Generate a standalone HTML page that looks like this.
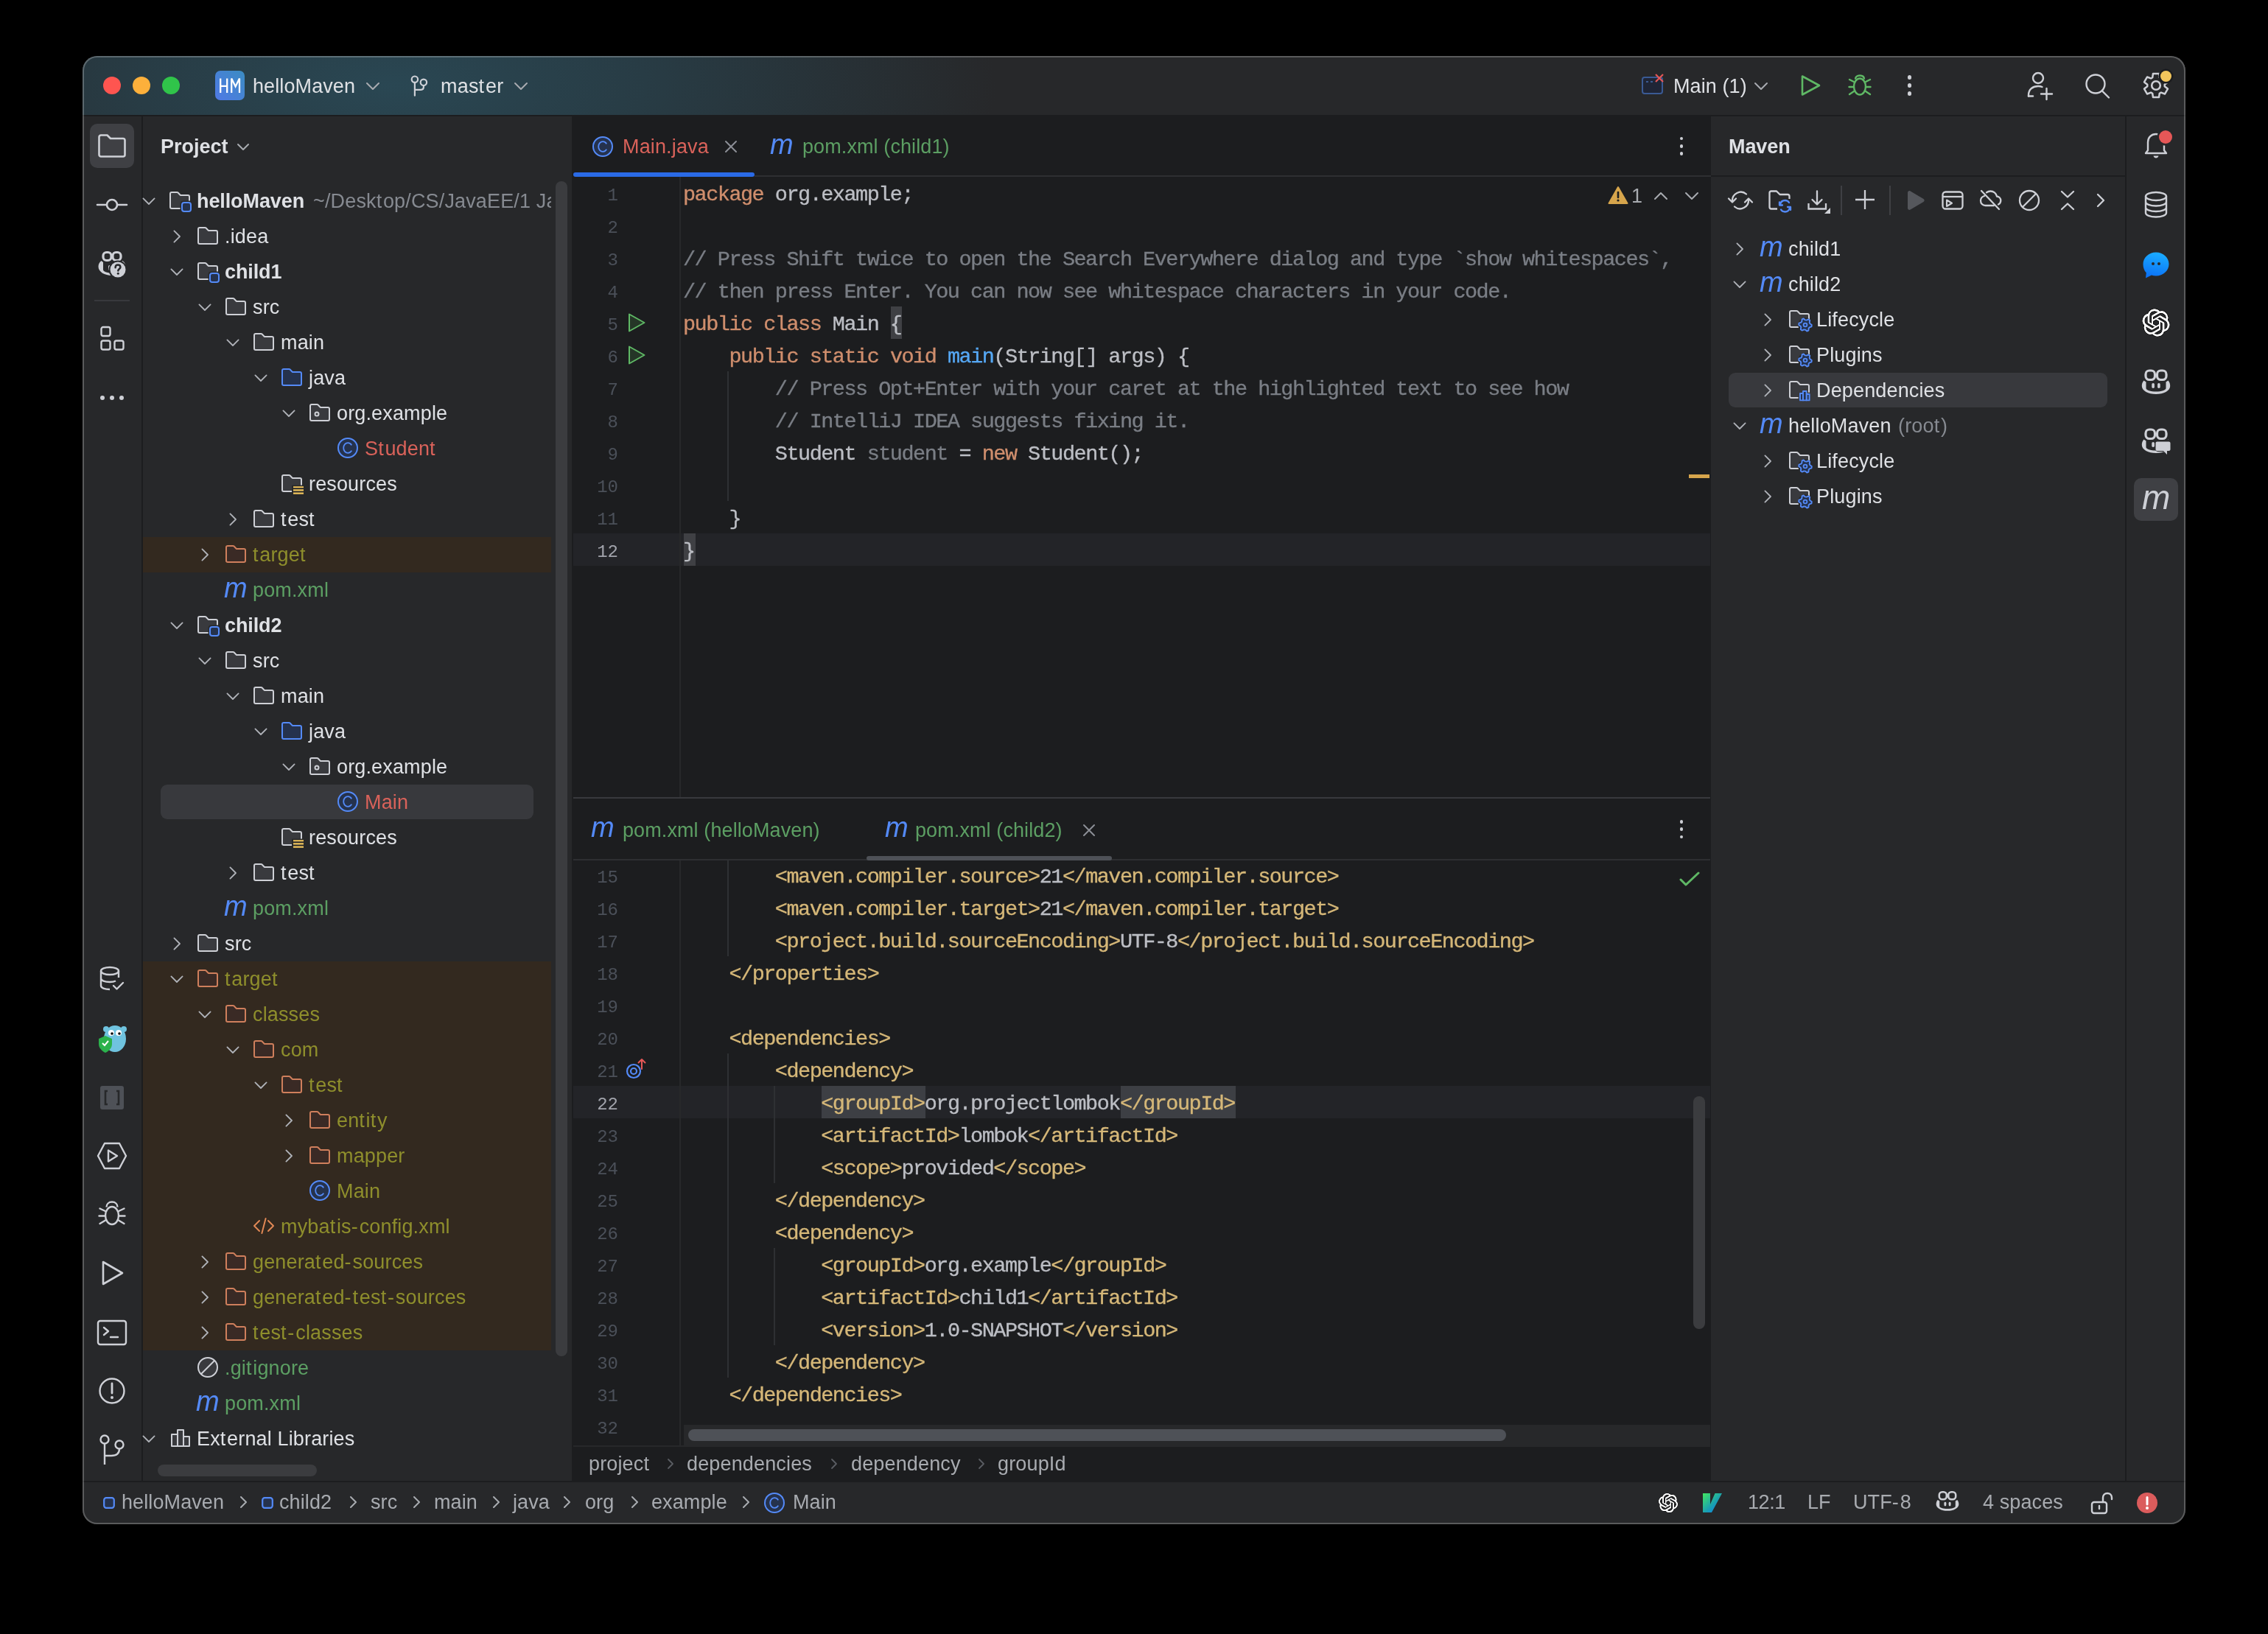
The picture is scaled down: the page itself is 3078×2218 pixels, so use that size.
<!DOCTYPE html><html><head><meta charset="utf-8"><style>
*{margin:0;padding:0;box-sizing:border-box}
html,body{width:3078px;height:2218px;background:#000;overflow:hidden}
.t{position:absolute;white-space:pre;will-change:transform}
.r{position:absolute}
.s{position:absolute;overflow:visible}
#win{position:absolute;left:112px;top:76px;width:2854px;height:1993px;border-radius:20px;overflow:hidden;background:#27282a}
</style></head><body><div id="win"><div style="position:absolute;left:-112px;top:-76px;width:3078px;height:2218px">
<div class="r" style="left:112px;top:76px;width:2854px;height:80px;background:radial-gradient(ellipse 820px 300px at 420px 40px, #2a4753 0%, #283c45 42%, #27282a 100%);"></div>
<div class="r" style="left:112px;top:156px;width:2854px;height:1855px;background:#27282a;"></div>
<div class="r" style="left:112px;top:156px;width:2854px;height:2px;background:#1c1d1f;"></div>
<div class="r" style="left:192px;top:156px;width:2px;height:1855px;background:#1c1d1f;"></div>
<div class="r" style="left:776px;top:156px;width:1546px;height:1855px;background:#1c1d1f;"></div>
<div class="r" style="left:2884px;top:156px;width:2px;height:1855px;background:#1c1d1f;"></div>
<div class="r" style="left:112px;top:2010px;width:2854px;height:2px;background:#1c1d1f;"></div>
<div class="r" style="left:112px;top:2012px;width:2854px;height:57px;background:#27282a;"></div>
<div class="r" style="left:140px;top:104px;width:24px;height:24px;border-radius:12px;background:#fe5550"></div>
<div class="r" style="left:180px;top:104px;width:24px;height:24px;border-radius:12px;background:#fdb03b"></div>
<div class="r" style="left:220px;top:104px;width:24px;height:24px;border-radius:12px;background:#30c44a"></div>
<div class="r" style="left:292px;top:96px;width:40px;height:40px;background:linear-gradient(45deg,#5079e6 0%,#3b8cc2 100%);border-radius:7px"></div>
<svg class="s" style="left:292px;top:96px;" width="40" height="40" viewBox="0 0 40 40" fill="none"><path d="M7.2 10.6V30M16.2 10.6V30M7.2 20.8H16.2M22.2 30V10.6L27.6 21.5L33 10.6V30" stroke="#fff" stroke-width="2.3" stroke-linejoin="miter"/></svg>
<div class="t" style="left:343px;top:100.64px;font-size:27px;line-height:32px;color:#dfe1e5;font-weight:400;letter-spacing:0.1px;font-family:'Liberation Sans', sans-serif;">helloMaven</div>
<svg class="s" style="left:497px;top:111.0px;" width="18" height="12.0" viewBox="0 0 18 12.0" fill="none"><path d="M1 2L9.0 10.0L17 2" stroke="#a8abb0" stroke-width="2" stroke-linecap="round" stroke-linejoin="round"/></svg>
<svg class="s" style="left:556px;top:100px;" width="28" height="34" viewBox="0 0 28 34" fill="none"><circle cx="6.9" cy="7.7" r="4.2" stroke="#ced0d6" stroke-width="2.2"/><circle cx="18.9" cy="11.8" r="4.2" stroke="#ced0d6" stroke-width="2.2"/><path d="M6.9 11.9V29.7M6.9 21.8H15.4C17.4 21.8 18.9 20.3 18.9 18.3V16" stroke="#ced0d6" stroke-width="2.2" stroke-linecap="round"/></svg>
<div class="t" style="left:598px;top:100.64px;font-size:27px;line-height:32px;color:#dfe1e5;font-weight:400;letter-spacing:0.2px;font-family:'Liberation Sans', sans-serif;">mas<span style="letter-spacing:1.80px">t</span>er</div>
<svg class="s" style="left:698px;top:111.0px;" width="18" height="12.0" viewBox="0 0 18 12.0" fill="none"><path d="M1 2L9.0 10.0L17 2" stroke="#a8abb0" stroke-width="2" stroke-linecap="round" stroke-linejoin="round"/></svg>
<svg class="s" style="left:2226px;top:98px;" width="36" height="34" viewBox="0 0 36 34" fill="none"><rect x="3" y="7" width="27" height="22" rx="3" fill="#1f2536" stroke="#3a5a94" stroke-width="2"/><path d="M8 13H11M14 13H17" stroke="#3a5a94" stroke-width="2"/><path d="M21 3L31 13M31 3L21 13" stroke="#e55757" stroke-width="2.2"/></svg>
<div class="t" style="left:2271px;top:100.64px;font-size:27px;line-height:32px;color:#dfe1e5;font-weight:400;letter-spacing:0.1px;font-family:'Liberation Sans', sans-serif;">Main (1)</div>
<svg class="s" style="left:2381px;top:111.0px;" width="18" height="12.0" viewBox="0 0 18 12.0" fill="none"><path d="M1 2L9.0 10.0L17 2" stroke="#a8abb0" stroke-width="2" stroke-linecap="round" stroke-linejoin="round"/></svg>
<svg class="s" style="left:2440px;top:98px;" width="34" height="36" viewBox="0 0 34 36" fill="none"><path d="M6 5.5V30.5L29 18Z" stroke="#5fb865" stroke-width="2.6" stroke-linejoin="round"/></svg>
<svg class="s" style="left:2506px;top:98px;" width="36" height="36" viewBox="0 0 36 36" fill="none"><path d="M12 9.5C12 6.5 14 4.5 18 4.5C22 4.5 24 6.5 24 9.5" stroke="#5fb865" stroke-width="2.4"/><ellipse cx="18" cy="19.5" rx="8" ry="11" stroke="#5fb865" stroke-width="2.4"/><path d="M10 13L4 10M26 13L32 10M10 20H3.5M26 20H32.5M10 26L4 30M26 26L32 30" stroke="#5fb865" stroke-width="2.4" stroke-linecap="round"/></svg>
<div class="r" style="left:2589px;top:102.3px;width:5.4px;height:5.4px;border-radius:3px;background:#ced0d6"></div>
<div class="r" style="left:2589px;top:113.3px;width:5.4px;height:5.4px;border-radius:3px;background:#ced0d6"></div>
<div class="r" style="left:2589px;top:124.3px;width:5.4px;height:5.4px;border-radius:3px;background:#ced0d6"></div>
<svg class="s" style="left:2746px;top:96px;" width="44" height="40" viewBox="0 0 44 40" fill="none"><circle cx="20" cy="10" r="7" stroke="#ced0d6" stroke-width="2.4"/><path d="M7 34.5V33C7 25 13 21 20 21C22 21 24 21.3 25.5 22" stroke="#ced0d6" stroke-width="2.4" stroke-linecap="round"/><path d="M7 34.5H13" stroke="#ced0d6" stroke-width="2.4" stroke-linecap="round"/><path d="M31.5 24V39M24 31.5H39" stroke="#ced0d6" stroke-width="2.4" stroke-linecap="round"/></svg>
<svg class="s" style="left:2826px;top:96px;" width="42" height="42" viewBox="0 0 42 42" fill="none"><circle cx="18" cy="18" r="12.5" stroke="#ced0d6" stroke-width="2.4"/><path d="M27.5 28L36 36.5" stroke="#ced0d6" stroke-width="2.4" stroke-linecap="round"/></svg>
<svg class="s" style="left:2906px;top:96px;" width="40" height="40" viewBox="0 0 40 40" fill="none"><path d="M15.20 9.22 L15.98 3.89 L24.02 3.89 L24.80 9.22 L26.94 10.45 L31.94 8.47 L35.96 15.42 L31.74 18.77 L31.74 21.23 L35.96 24.58 L31.94 31.53 L26.94 29.55 L24.80 30.78 L24.02 36.11 L15.98 36.11 L15.20 30.78 L13.06 29.55 L8.06 31.53 L4.04 24.58 L8.26 21.23 L8.26 18.77 L4.04 15.42 L8.06 8.47 L13.06 10.45Z" stroke="#ced0d6" stroke-width="2.5" stroke-linejoin="round"/><circle cx="20" cy="20" r="5.8" stroke="#ced0d6" stroke-width="2.6"/></svg>
<div class="r" style="left:2931.5px;top:95.5px;width:15px;height:15px;border-radius:8px;background:#f2c55c;box-shadow:0 0 0 2.5px #1c1d1f"></div>
<div class="r" style="left:122px;top:168px;width:60px;height:60px;background:#3f4044;border-radius:10px"></div>
<svg class="s" style="left:132px;top:181px;" width="40" height="34" viewBox="0 0 40 34" fill="none"><path d="M2.5 5C2.5 3.6 3.6 2.5 5 2.5H13.5L18 7H35C36.4 7 37.5 8.1 37.5 9.5V29C37.5 30.4 36.4 31.5 35 31.5H5C3.6 31.5 2.5 30.4 2.5 29Z" stroke="#ced0d6" stroke-width="2.6" stroke-linejoin="round"/></svg>
<svg class="s" style="left:130px;top:265px;" width="44" height="26" viewBox="0 0 44 26" fill="none"><path d="M2 13H14M30 13H42" stroke="#ced0d6" stroke-width="2.6" stroke-linecap="round"/><circle cx="22" cy="13" r="7" stroke="#ced0d6" stroke-width="2.6"/></svg>
<svg class="s" style="left:132px;top:340px;" width="40" height="38" viewBox="0 0 40 38" fill="none"><rect x="8" y="2.5" width="11" height="11" rx="4.5" stroke="#ced0d6" stroke-width="3.2"/><rect x="21" y="2.5" width="11" height="11" rx="4.5" stroke="#ced0d6" stroke-width="3.2"/><path d="M5.5 14C2.5 16 1.5 19 1.5 22C1.5 29 10 34 20 34C30 34 38.5 29 38.5 22C38.5 19 37.5 16 34.5 14L32 16V26C32 28.5 27 30.5 20 30.5C13 30.5 8 28.5 8 26V16Z" fill="#ced0d6"/><rect x="15" y="20" width="3.4" height="7" rx="1.7" fill="#ced0d6"/><circle cx="28" cy="26" r="12.5" fill="#27282a"/><circle cx="28" cy="26" r="10.5" fill="#ced0d6"/><path d="M24.6 23.2C24.6 20.9 26.1 19.6 28 19.6C30 19.6 31.4 20.8 31.4 22.7C31.4 24.9 28.3 25.2 28.3 27.6" stroke="#27282a" stroke-width="2.5" stroke-linecap="round"/><circle cx="28.3" cy="31.3" r="1.5" fill="#27282a"/></svg>
<div class="r" style="left:128px;top:407px;width:48px;height:2px;background:#38393d;"></div>
<svg class="s" style="left:135px;top:442px;" width="40" height="36" viewBox="0 0 40 36" fill="none"><rect x="2.5" y="2" width="12" height="12" rx="2.5" stroke="#ced0d6" stroke-width="2.4"/><rect x="2.5" y="20.5" width="12" height="12" rx="2.5" stroke="#ced0d6" stroke-width="2.4"/><rect x="20.5" y="20.5" width="12" height="12" rx="2.5" stroke="#ced0d6" stroke-width="2.4"/></svg>
<div class="r" style="left:136px;top:536.5px;width:6px;height:6px;border-radius:3px;background:#ced0d6"></div>
<div class="r" style="left:149px;top:536.5px;width:6px;height:6px;border-radius:3px;background:#ced0d6"></div>
<div class="r" style="left:162px;top:536.5px;width:6px;height:6px;border-radius:3px;background:#ced0d6"></div>
<svg class="s" style="left:132px;top:1310px;" width="40" height="40" viewBox="0 0 40 40" fill="none"><ellipse cx="17" cy="8" rx="12" ry="5" stroke="#ced0d6" stroke-width="2.4"/><path d="M5 8V28C5 31 10 33 17 33M29 8V17M5 18C5 21 10 23 17 23C20 23 23 22.5 25 21.5" stroke="#ced0d6" stroke-width="2.4"/><path d="M22 28L26.5 32.5L35 24" stroke="#ced0d6" stroke-width="2.4" stroke-linecap="round" stroke-linejoin="round"/></svg>
<svg class="s" style="left:130px;top:1388px;" width="46" height="44" viewBox="0 0 46 44" fill="none"><ellipse cx="26" cy="22" rx="15" ry="18" fill="#6fc3df"/><circle cx="14" cy="9" r="4" fill="#6fc3df"/><circle cx="38" cy="9" r="4" fill="#6fc3df"/><circle cx="21" cy="14" r="4" fill="#fff"/><circle cx="31" cy="14" r="4" fill="#fff"/><circle cx="22" cy="15" r="1.8" fill="#000"/><circle cx="32" cy="15" r="1.8" fill="#000"/><path d="M4 22L13 18L22 22V29C22 35 17 39 13 41C9 39 4 35 4 29Z" fill="#2bb24c"/><path d="M9 28L12 31L17 25" stroke="#fff" stroke-width="2" fill="none"/></svg>
<svg class="s" style="left:134px;top:1472px;" width="36" height="36" viewBox="0 0 36 36" fill="none"><rect x="2" y="2" width="32" height="32" rx="3" fill="#4e5157"/><path d="M12 9H9V27H12M24 9H27V27H24" stroke="#27282a" stroke-width="2.6"/></svg>
<svg class="s" style="left:130px;top:1549px;" width="44" height="40" viewBox="0 0 44 40" fill="none"><path d="M12 3H32L41 20L32 37H12L3 20Z" stroke="#ced0d6" stroke-width="2.4" stroke-linejoin="round"/><path d="M17 12.5V27.5L29 20Z" stroke="#ced0d6" stroke-width="2.4" stroke-linejoin="round"/></svg>
<svg class="s" style="left:131px;top:1628px;" width="42" height="42" viewBox="0 0 42 42" fill="none"><path d="M13.5 10.5C13.5 6.5 16.5 3.5 21 3.5C25.5 3.5 28.5 6.5 28.5 10.5" stroke="#ced0d6" stroke-width="2.4"/><ellipse cx="21" cy="22" rx="9" ry="12" stroke="#ced0d6" stroke-width="2.4"/><path d="M12 16L4.5 12.5M30 16L37.5 12.5M12 22.5H3.5M30 22.5H38.5M12 28.5L4.5 33M30 28.5L37.5 33" stroke="#ced0d6" stroke-width="2.4" stroke-linecap="round"/></svg>
<svg class="s" style="left:134px;top:1708px;" width="36" height="40" viewBox="0 0 36 40" fill="none"><path d="M6 5V35L32 20Z" stroke="#ced0d6" stroke-width="2.6" stroke-linejoin="round"/></svg>
<svg class="s" style="left:130px;top:1788px;" width="44" height="42" viewBox="0 0 44 42" fill="none"><rect x="3" y="5" width="38" height="32" rx="3" stroke="#ced0d6" stroke-width="2.4"/><path d="M11 14L17 19L11 24M20 27H30" stroke="#ced0d6" stroke-width="2.4" stroke-linecap="round" stroke-linejoin="round"/></svg>
<svg class="s" style="left:132px;top:1868px;" width="40" height="40" viewBox="0 0 40 40" fill="none"><circle cx="20" cy="20" r="16.5" stroke="#ced0d6" stroke-width="2.4"/><path d="M20 10V23" stroke="#ced0d6" stroke-width="2.8" stroke-linecap="round"/><circle cx="20" cy="29" r="2" fill="#ced0d6"/></svg>
<svg class="s" style="left:132px;top:1946px;" width="40" height="44" viewBox="0 0 40 44" fill="none"><circle cx="10" cy="8" r="5.5" stroke="#ced0d6" stroke-width="2.4"/><circle cx="30" cy="15" r="5.5" stroke="#ced0d6" stroke-width="2.4"/><path d="M10 13.5V42M30 20.5C30 27 26 30 19 30H10" stroke="#ced0d6" stroke-width="2.4"/></svg>
<div class="t" style="left:218px;top:182.64px;font-size:27px;line-height:32px;color:#dfe1e5;font-weight:700;letter-spacing:0.0px;font-family:'Liberation Sans', sans-serif;">Project</div>
<svg class="s" style="left:322px;top:193.5px;" width="16" height="11.0" viewBox="0 0 16 11.0" fill="none"><path d="M1 2L8.0 9.0L15 2" stroke="#a8abb0" stroke-width="2" stroke-linecap="round" stroke-linejoin="round"/></svg>
<div class="r" style="left:194px;top:729px;width:554px;height:48px;background:#33291f;"></div>
<div class="r" style="left:194px;top:1305px;width:554px;height:528px;background:#33291f;"></div>
<svg class="s" style="left:186px;top:257px;" width="32" height="32" viewBox="0 0 16 16" fill="none"><path d="M4.2 6.2L8 10L11.8 6.2" stroke="#b0b3b9" stroke-width="0.9" stroke-linecap="round" stroke-linejoin="round"/></svg>
<svg class="s" style="left:228px;top:256px;" width="32" height="32" viewBox="0 0 16 16" fill="none"><path d="M1.5 3.5C1.5 2.95 1.95 2.5 2.5 2.5H6.09C6.35 2.5 6.61 2.61 6.79 2.79L8.21 4.21C8.39 4.39 8.65 4.5 8.91 4.5H13.5C14.05 4.5 14.5 4.95 14.5 5.5V12.5C14.5 13.05 14.05 13.5 13.5 13.5H2.5C1.95 13.5 1.5 13.05 1.5 12.5V3.5Z" fill="#393a3e" stroke="#ced0d6"/><rect x="8.3" y="8.3" width="8.4" height="8.4" rx="2" fill="#27282a"/><rect x="9.5" y="9.5" width="6" height="6" rx="1.5" fill="#25324d" stroke="#548af7"/></svg>
<div class="t" style="left:267px;top:256.64px;font-size:27px;line-height:32px;color:#dfe1e5;font-weight:700;letter-spacing:-0.1px;font-family:'Liberation Sans', sans-serif;">helloMaven</div>
<svg class="s" style="left:224px;top:305px;" width="32" height="32" viewBox="0 0 16 16" fill="none"><path d="M6.2 4.2L10 8L6.2 11.8" stroke="#b0b3b9" stroke-width="0.9" stroke-linecap="round" stroke-linejoin="round"/></svg>
<svg class="s" style="left:266px;top:304px;" width="32" height="32" viewBox="0 0 16 16" fill="none"><path d="M1.5 3.5C1.5 2.95 1.95 2.5 2.5 2.5H6.09C6.35 2.5 6.61 2.61 6.79 2.79L8.21 4.21C8.39 4.39 8.65 4.5 8.91 4.5H13.5C14.05 4.5 14.5 4.95 14.5 5.5V12.5C14.5 13.05 14.05 13.5 13.5 13.5H2.5C1.95 13.5 1.5 13.05 1.5 12.5V3.5Z" fill="#393a3e" stroke="#ced0d6"/></svg>
<div class="t" style="left:305px;top:304.64px;font-size:27px;line-height:32px;color:#dfe1e5;font-weight:400;letter-spacing:0.15px;font-family:'Liberation Sans', sans-serif;">.idea</div>
<svg class="s" style="left:224px;top:353px;" width="32" height="32" viewBox="0 0 16 16" fill="none"><path d="M4.2 6.2L8 10L11.8 6.2" stroke="#b0b3b9" stroke-width="0.9" stroke-linecap="round" stroke-linejoin="round"/></svg>
<svg class="s" style="left:266px;top:352px;" width="32" height="32" viewBox="0 0 16 16" fill="none"><path d="M1.5 3.5C1.5 2.95 1.95 2.5 2.5 2.5H6.09C6.35 2.5 6.61 2.61 6.79 2.79L8.21 4.21C8.39 4.39 8.65 4.5 8.91 4.5H13.5C14.05 4.5 14.5 4.95 14.5 5.5V12.5C14.5 13.05 14.05 13.5 13.5 13.5H2.5C1.95 13.5 1.5 13.05 1.5 12.5V3.5Z" fill="#393a3e" stroke="#ced0d6"/><rect x="8.3" y="8.3" width="8.4" height="8.4" rx="2" fill="#27282a"/><rect x="9.5" y="9.5" width="6" height="6" rx="1.5" fill="#25324d" stroke="#548af7"/></svg>
<div class="t" style="left:305px;top:352.64px;font-size:27px;line-height:32px;color:#dfe1e5;font-weight:700;letter-spacing:-0.1px;font-family:'Liberation Sans', sans-serif;">child1</div>
<svg class="s" style="left:262px;top:401px;" width="32" height="32" viewBox="0 0 16 16" fill="none"><path d="M4.2 6.2L8 10L11.8 6.2" stroke="#b0b3b9" stroke-width="0.9" stroke-linecap="round" stroke-linejoin="round"/></svg>
<svg class="s" style="left:304px;top:400px;" width="32" height="32" viewBox="0 0 16 16" fill="none"><path d="M1.5 3.5C1.5 2.95 1.95 2.5 2.5 2.5H6.09C6.35 2.5 6.61 2.61 6.79 2.79L8.21 4.21C8.39 4.39 8.65 4.5 8.91 4.5H13.5C14.05 4.5 14.5 4.95 14.5 5.5V12.5C14.5 13.05 14.05 13.5 13.5 13.5H2.5C1.95 13.5 1.5 13.05 1.5 12.5V3.5Z" fill="#393a3e" stroke="#ced0d6"/></svg>
<div class="t" style="left:343px;top:400.64px;font-size:27px;line-height:32px;color:#dfe1e5;font-weight:400;letter-spacing:0.15px;font-family:'Liberation Sans', sans-serif;">src</div>
<svg class="s" style="left:300px;top:449px;" width="32" height="32" viewBox="0 0 16 16" fill="none"><path d="M4.2 6.2L8 10L11.8 6.2" stroke="#b0b3b9" stroke-width="0.9" stroke-linecap="round" stroke-linejoin="round"/></svg>
<svg class="s" style="left:342px;top:448px;" width="32" height="32" viewBox="0 0 16 16" fill="none"><path d="M1.5 3.5C1.5 2.95 1.95 2.5 2.5 2.5H6.09C6.35 2.5 6.61 2.61 6.79 2.79L8.21 4.21C8.39 4.39 8.65 4.5 8.91 4.5H13.5C14.05 4.5 14.5 4.95 14.5 5.5V12.5C14.5 13.05 14.05 13.5 13.5 13.5H2.5C1.95 13.5 1.5 13.05 1.5 12.5V3.5Z" fill="#393a3e" stroke="#ced0d6"/></svg>
<div class="t" style="left:381px;top:448.64px;font-size:27px;line-height:32px;color:#dfe1e5;font-weight:400;letter-spacing:0.15px;font-family:'Liberation Sans', sans-serif;">main</div>
<svg class="s" style="left:338px;top:497px;" width="32" height="32" viewBox="0 0 16 16" fill="none"><path d="M4.2 6.2L8 10L11.8 6.2" stroke="#b0b3b9" stroke-width="0.9" stroke-linecap="round" stroke-linejoin="round"/></svg>
<svg class="s" style="left:380px;top:496px;" width="32" height="32" viewBox="0 0 16 16" fill="none"><path d="M1.5 3.5C1.5 2.95 1.95 2.5 2.5 2.5H6.09C6.35 2.5 6.61 2.61 6.79 2.79L8.21 4.21C8.39 4.39 8.65 4.5 8.91 4.5H13.5C14.05 4.5 14.5 4.95 14.5 5.5V12.5C14.5 13.05 14.05 13.5 13.5 13.5H2.5C1.95 13.5 1.5 13.05 1.5 12.5V3.5Z" fill="#25324d" stroke="#548af7"/></svg>
<div class="t" style="left:419px;top:496.64px;font-size:27px;line-height:32px;color:#dfe1e5;font-weight:400;letter-spacing:0.15px;font-family:'Liberation Sans', sans-serif;">java</div>
<svg class="s" style="left:376px;top:545px;" width="32" height="32" viewBox="0 0 16 16" fill="none"><path d="M4.2 6.2L8 10L11.8 6.2" stroke="#b0b3b9" stroke-width="0.9" stroke-linecap="round" stroke-linejoin="round"/></svg>
<svg class="s" style="left:418px;top:544px;" width="32" height="32" viewBox="0 0 16 16" fill="none"><path d="M1.5 3.5C1.5 2.95 1.95 2.5 2.5 2.5H6.09C6.35 2.5 6.61 2.61 6.79 2.79L8.21 4.21C8.39 4.39 8.65 4.5 8.91 4.5H13.5C14.05 4.5 14.5 4.95 14.5 5.5V12.5C14.5 13.05 14.05 13.5 13.5 13.5H2.5C1.95 13.5 1.5 13.05 1.5 12.5V3.5Z" fill="#393a3e" stroke="#ced0d6"/><circle cx="6" cy="9" r="1.25" stroke="#ced0d6"/></svg>
<div class="t" style="left:457px;top:544.64px;font-size:27px;line-height:32px;color:#dfe1e5;font-weight:400;letter-spacing:0.15px;font-family:'Liberation Sans', sans-serif;">org.example</div>
<svg class="s" style="left:456px;top:592px;" width="32" height="32" viewBox="0 0 16 16" fill="none"><circle cx="8" cy="8" r="6.5" fill="#25324d" stroke="#548af7"/><path d="M10.6 6.2C10.1 5.2 9.2 4.6 8.1 4.6C6.4 4.6 5.1 6.1 5.1 8C5.1 9.9 6.4 11.4 8.1 11.4C9.2 11.4 10.1 10.8 10.6 9.8" stroke="#548af7" stroke-width="0.9"/></svg>
<div class="t" style="left:495px;top:592.64px;font-size:27px;line-height:32px;color:#d9625a;font-weight:400;letter-spacing:0.15px;font-family:'Liberation Sans', sans-serif;">S<span style="letter-spacing:1.75px">t</span>uden<span style="letter-spacing:1.75px">t</span></div>
<svg class="s" style="left:380px;top:640px;" width="32" height="32" viewBox="0 0 16 16" fill="none"><path d="M1.5 3.5C1.5 2.95 1.95 2.5 2.5 2.5H6.09C6.35 2.5 6.61 2.61 6.79 2.79L8.21 4.21C8.39 4.39 8.65 4.5 8.91 4.5H13.5C14.05 4.5 14.5 4.95 14.5 5.5V12.5C14.5 13.05 14.05 13.5 13.5 13.5H2.5C1.95 13.5 1.5 13.05 1.5 12.5V3.5Z" fill="#393a3e" stroke="#ced0d6"/><rect x="8" y="9.3" width="9" height="7" fill="#27282a"/><path d="M9 10.6H16M9 12.7H16M9 14.8H16" stroke="#f2c55c" stroke-width="1.05"/></svg>
<div class="t" style="left:419px;top:640.64px;font-size:27px;line-height:32px;color:#dfe1e5;font-weight:400;letter-spacing:0.15px;font-family:'Liberation Sans', sans-serif;">resources</div>
<svg class="s" style="left:300px;top:689px;" width="32" height="32" viewBox="0 0 16 16" fill="none"><path d="M6.2 4.2L10 8L6.2 11.8" stroke="#b0b3b9" stroke-width="0.9" stroke-linecap="round" stroke-linejoin="round"/></svg>
<svg class="s" style="left:342px;top:688px;" width="32" height="32" viewBox="0 0 16 16" fill="none"><path d="M1.5 3.5C1.5 2.95 1.95 2.5 2.5 2.5H6.09C6.35 2.5 6.61 2.61 6.79 2.79L8.21 4.21C8.39 4.39 8.65 4.5 8.91 4.5H13.5C14.05 4.5 14.5 4.95 14.5 5.5V12.5C14.5 13.05 14.05 13.5 13.5 13.5H2.5C1.95 13.5 1.5 13.05 1.5 12.5V3.5Z" fill="#393a3e" stroke="#ced0d6"/></svg>
<div class="t" style="left:381px;top:688.64px;font-size:27px;line-height:32px;color:#dfe1e5;font-weight:400;letter-spacing:0.15px;font-family:'Liberation Sans', sans-serif;"><span style="letter-spacing:1.75px">t</span>es<span style="letter-spacing:1.75px">t</span></div>
<svg class="s" style="left:262px;top:737px;" width="32" height="32" viewBox="0 0 16 16" fill="none"><path d="M6.2 4.2L10 8L6.2 11.8" stroke="#b0b3b9" stroke-width="0.9" stroke-linecap="round" stroke-linejoin="round"/></svg>
<svg class="s" style="left:304px;top:736px;" width="32" height="32" viewBox="0 0 16 16" fill="none"><path d="M1.5 3.5C1.5 2.95 1.95 2.5 2.5 2.5H6.09C6.35 2.5 6.61 2.61 6.79 2.79L8.21 4.21C8.39 4.39 8.65 4.5 8.91 4.5H13.5C14.05 4.5 14.5 4.95 14.5 5.5V12.5C14.5 13.05 14.05 13.5 13.5 13.5H2.5C1.95 13.5 1.5 13.05 1.5 12.5V3.5Z" fill="#3a2a25" stroke="#cf7f5c"/></svg>
<div class="t" style="left:343px;top:736.64px;font-size:27px;line-height:32px;color:#8e8e2c;font-weight:400;letter-spacing:0.15px;font-family:'Liberation Sans', sans-serif;"><span style="letter-spacing:1.75px">t</span>arge<span style="letter-spacing:1.75px">t</span></div>
<div class="t" style="left:304px;top:775.33px;font-size:38px;line-height:46px;color:#548af7;font-weight:400;letter-spacing:0.0px;font-family:'Liberation Sans', sans-serif;font-style:italic">m</div>
<div class="t" style="left:343px;top:784.64px;font-size:27px;line-height:32px;color:#5c9f63;font-weight:400;letter-spacing:0.15px;font-family:'Liberation Sans', sans-serif;">pom.xml</div>
<svg class="s" style="left:224px;top:833px;" width="32" height="32" viewBox="0 0 16 16" fill="none"><path d="M4.2 6.2L8 10L11.8 6.2" stroke="#b0b3b9" stroke-width="0.9" stroke-linecap="round" stroke-linejoin="round"/></svg>
<svg class="s" style="left:266px;top:832px;" width="32" height="32" viewBox="0 0 16 16" fill="none"><path d="M1.5 3.5C1.5 2.95 1.95 2.5 2.5 2.5H6.09C6.35 2.5 6.61 2.61 6.79 2.79L8.21 4.21C8.39 4.39 8.65 4.5 8.91 4.5H13.5C14.05 4.5 14.5 4.95 14.5 5.5V12.5C14.5 13.05 14.05 13.5 13.5 13.5H2.5C1.95 13.5 1.5 13.05 1.5 12.5V3.5Z" fill="#393a3e" stroke="#ced0d6"/><rect x="8.3" y="8.3" width="8.4" height="8.4" rx="2" fill="#27282a"/><rect x="9.5" y="9.5" width="6" height="6" rx="1.5" fill="#25324d" stroke="#548af7"/></svg>
<div class="t" style="left:305px;top:832.64px;font-size:27px;line-height:32px;color:#dfe1e5;font-weight:700;letter-spacing:-0.1px;font-family:'Liberation Sans', sans-serif;">child2</div>
<svg class="s" style="left:262px;top:881px;" width="32" height="32" viewBox="0 0 16 16" fill="none"><path d="M4.2 6.2L8 10L11.8 6.2" stroke="#b0b3b9" stroke-width="0.9" stroke-linecap="round" stroke-linejoin="round"/></svg>
<svg class="s" style="left:304px;top:880px;" width="32" height="32" viewBox="0 0 16 16" fill="none"><path d="M1.5 3.5C1.5 2.95 1.95 2.5 2.5 2.5H6.09C6.35 2.5 6.61 2.61 6.79 2.79L8.21 4.21C8.39 4.39 8.65 4.5 8.91 4.5H13.5C14.05 4.5 14.5 4.95 14.5 5.5V12.5C14.5 13.05 14.05 13.5 13.5 13.5H2.5C1.95 13.5 1.5 13.05 1.5 12.5V3.5Z" fill="#393a3e" stroke="#ced0d6"/></svg>
<div class="t" style="left:343px;top:880.64px;font-size:27px;line-height:32px;color:#dfe1e5;font-weight:400;letter-spacing:0.15px;font-family:'Liberation Sans', sans-serif;">src</div>
<svg class="s" style="left:300px;top:929px;" width="32" height="32" viewBox="0 0 16 16" fill="none"><path d="M4.2 6.2L8 10L11.8 6.2" stroke="#b0b3b9" stroke-width="0.9" stroke-linecap="round" stroke-linejoin="round"/></svg>
<svg class="s" style="left:342px;top:928px;" width="32" height="32" viewBox="0 0 16 16" fill="none"><path d="M1.5 3.5C1.5 2.95 1.95 2.5 2.5 2.5H6.09C6.35 2.5 6.61 2.61 6.79 2.79L8.21 4.21C8.39 4.39 8.65 4.5 8.91 4.5H13.5C14.05 4.5 14.5 4.95 14.5 5.5V12.5C14.5 13.05 14.05 13.5 13.5 13.5H2.5C1.95 13.5 1.5 13.05 1.5 12.5V3.5Z" fill="#393a3e" stroke="#ced0d6"/></svg>
<div class="t" style="left:381px;top:928.64px;font-size:27px;line-height:32px;color:#dfe1e5;font-weight:400;letter-spacing:0.15px;font-family:'Liberation Sans', sans-serif;">main</div>
<svg class="s" style="left:338px;top:977px;" width="32" height="32" viewBox="0 0 16 16" fill="none"><path d="M4.2 6.2L8 10L11.8 6.2" stroke="#b0b3b9" stroke-width="0.9" stroke-linecap="round" stroke-linejoin="round"/></svg>
<svg class="s" style="left:380px;top:976px;" width="32" height="32" viewBox="0 0 16 16" fill="none"><path d="M1.5 3.5C1.5 2.95 1.95 2.5 2.5 2.5H6.09C6.35 2.5 6.61 2.61 6.79 2.79L8.21 4.21C8.39 4.39 8.65 4.5 8.91 4.5H13.5C14.05 4.5 14.5 4.95 14.5 5.5V12.5C14.5 13.05 14.05 13.5 13.5 13.5H2.5C1.95 13.5 1.5 13.05 1.5 12.5V3.5Z" fill="#25324d" stroke="#548af7"/></svg>
<div class="t" style="left:419px;top:976.64px;font-size:27px;line-height:32px;color:#dfe1e5;font-weight:400;letter-spacing:0.15px;font-family:'Liberation Sans', sans-serif;">java</div>
<svg class="s" style="left:376px;top:1025px;" width="32" height="32" viewBox="0 0 16 16" fill="none"><path d="M4.2 6.2L8 10L11.8 6.2" stroke="#b0b3b9" stroke-width="0.9" stroke-linecap="round" stroke-linejoin="round"/></svg>
<svg class="s" style="left:418px;top:1024px;" width="32" height="32" viewBox="0 0 16 16" fill="none"><path d="M1.5 3.5C1.5 2.95 1.95 2.5 2.5 2.5H6.09C6.35 2.5 6.61 2.61 6.79 2.79L8.21 4.21C8.39 4.39 8.65 4.5 8.91 4.5H13.5C14.05 4.5 14.5 4.95 14.5 5.5V12.5C14.5 13.05 14.05 13.5 13.5 13.5H2.5C1.95 13.5 1.5 13.05 1.5 12.5V3.5Z" fill="#393a3e" stroke="#ced0d6"/><circle cx="6" cy="9" r="1.25" stroke="#ced0d6"/></svg>
<div class="t" style="left:457px;top:1024.64px;font-size:27px;line-height:32px;color:#dfe1e5;font-weight:400;letter-spacing:0.15px;font-family:'Liberation Sans', sans-serif;">org.example</div>
<div class="r" style="left:218px;top:1065px;width:506px;height:47px;background:#38393d;border-radius:9px"></div>
<svg class="s" style="left:456px;top:1072px;" width="32" height="32" viewBox="0 0 16 16" fill="none"><circle cx="8" cy="8" r="6.5" fill="#25324d" stroke="#548af7"/><path d="M10.6 6.2C10.1 5.2 9.2 4.6 8.1 4.6C6.4 4.6 5.1 6.1 5.1 8C5.1 9.9 6.4 11.4 8.1 11.4C9.2 11.4 10.1 10.8 10.6 9.8" stroke="#548af7" stroke-width="0.9"/></svg>
<div class="t" style="left:495px;top:1072.64px;font-size:27px;line-height:32px;color:#d9625a;font-weight:400;letter-spacing:0.15px;font-family:'Liberation Sans', sans-serif;">Main</div>
<svg class="s" style="left:380px;top:1120px;" width="32" height="32" viewBox="0 0 16 16" fill="none"><path d="M1.5 3.5C1.5 2.95 1.95 2.5 2.5 2.5H6.09C6.35 2.5 6.61 2.61 6.79 2.79L8.21 4.21C8.39 4.39 8.65 4.5 8.91 4.5H13.5C14.05 4.5 14.5 4.95 14.5 5.5V12.5C14.5 13.05 14.05 13.5 13.5 13.5H2.5C1.95 13.5 1.5 13.05 1.5 12.5V3.5Z" fill="#393a3e" stroke="#ced0d6"/><rect x="8" y="9.3" width="9" height="7" fill="#27282a"/><path d="M9 10.6H16M9 12.7H16M9 14.8H16" stroke="#f2c55c" stroke-width="1.05"/></svg>
<div class="t" style="left:419px;top:1120.64px;font-size:27px;line-height:32px;color:#dfe1e5;font-weight:400;letter-spacing:0.15px;font-family:'Liberation Sans', sans-serif;">resources</div>
<svg class="s" style="left:300px;top:1169px;" width="32" height="32" viewBox="0 0 16 16" fill="none"><path d="M6.2 4.2L10 8L6.2 11.8" stroke="#b0b3b9" stroke-width="0.9" stroke-linecap="round" stroke-linejoin="round"/></svg>
<svg class="s" style="left:342px;top:1168px;" width="32" height="32" viewBox="0 0 16 16" fill="none"><path d="M1.5 3.5C1.5 2.95 1.95 2.5 2.5 2.5H6.09C6.35 2.5 6.61 2.61 6.79 2.79L8.21 4.21C8.39 4.39 8.65 4.5 8.91 4.5H13.5C14.05 4.5 14.5 4.95 14.5 5.5V12.5C14.5 13.05 14.05 13.5 13.5 13.5H2.5C1.95 13.5 1.5 13.05 1.5 12.5V3.5Z" fill="#393a3e" stroke="#ced0d6"/></svg>
<div class="t" style="left:381px;top:1168.64px;font-size:27px;line-height:32px;color:#dfe1e5;font-weight:400;letter-spacing:0.15px;font-family:'Liberation Sans', sans-serif;"><span style="letter-spacing:1.75px">t</span>es<span style="letter-spacing:1.75px">t</span></div>
<div class="t" style="left:304px;top:1207.33px;font-size:38px;line-height:46px;color:#548af7;font-weight:400;letter-spacing:0.0px;font-family:'Liberation Sans', sans-serif;font-style:italic">m</div>
<div class="t" style="left:343px;top:1216.64px;font-size:27px;line-height:32px;color:#5c9f63;font-weight:400;letter-spacing:0.15px;font-family:'Liberation Sans', sans-serif;">pom.xml</div>
<svg class="s" style="left:224px;top:1265px;" width="32" height="32" viewBox="0 0 16 16" fill="none"><path d="M6.2 4.2L10 8L6.2 11.8" stroke="#b0b3b9" stroke-width="0.9" stroke-linecap="round" stroke-linejoin="round"/></svg>
<svg class="s" style="left:266px;top:1264px;" width="32" height="32" viewBox="0 0 16 16" fill="none"><path d="M1.5 3.5C1.5 2.95 1.95 2.5 2.5 2.5H6.09C6.35 2.5 6.61 2.61 6.79 2.79L8.21 4.21C8.39 4.39 8.65 4.5 8.91 4.5H13.5C14.05 4.5 14.5 4.95 14.5 5.5V12.5C14.5 13.05 14.05 13.5 13.5 13.5H2.5C1.95 13.5 1.5 13.05 1.5 12.5V3.5Z" fill="#393a3e" stroke="#ced0d6"/></svg>
<div class="t" style="left:305px;top:1264.64px;font-size:27px;line-height:32px;color:#dfe1e5;font-weight:400;letter-spacing:0.15px;font-family:'Liberation Sans', sans-serif;">src</div>
<svg class="s" style="left:224px;top:1313px;" width="32" height="32" viewBox="0 0 16 16" fill="none"><path d="M4.2 6.2L8 10L11.8 6.2" stroke="#b0b3b9" stroke-width="0.9" stroke-linecap="round" stroke-linejoin="round"/></svg>
<svg class="s" style="left:266px;top:1312px;" width="32" height="32" viewBox="0 0 16 16" fill="none"><path d="M1.5 3.5C1.5 2.95 1.95 2.5 2.5 2.5H6.09C6.35 2.5 6.61 2.61 6.79 2.79L8.21 4.21C8.39 4.39 8.65 4.5 8.91 4.5H13.5C14.05 4.5 14.5 4.95 14.5 5.5V12.5C14.5 13.05 14.05 13.5 13.5 13.5H2.5C1.95 13.5 1.5 13.05 1.5 12.5V3.5Z" fill="#3a2a25" stroke="#cf7f5c"/></svg>
<div class="t" style="left:305px;top:1312.64px;font-size:27px;line-height:32px;color:#8e8e2c;font-weight:400;letter-spacing:0.15px;font-family:'Liberation Sans', sans-serif;"><span style="letter-spacing:1.75px">t</span>arge<span style="letter-spacing:1.75px">t</span></div>
<svg class="s" style="left:262px;top:1361px;" width="32" height="32" viewBox="0 0 16 16" fill="none"><path d="M4.2 6.2L8 10L11.8 6.2" stroke="#b0b3b9" stroke-width="0.9" stroke-linecap="round" stroke-linejoin="round"/></svg>
<svg class="s" style="left:304px;top:1360px;" width="32" height="32" viewBox="0 0 16 16" fill="none"><path d="M1.5 3.5C1.5 2.95 1.95 2.5 2.5 2.5H6.09C6.35 2.5 6.61 2.61 6.79 2.79L8.21 4.21C8.39 4.39 8.65 4.5 8.91 4.5H13.5C14.05 4.5 14.5 4.95 14.5 5.5V12.5C14.5 13.05 14.05 13.5 13.5 13.5H2.5C1.95 13.5 1.5 13.05 1.5 12.5V3.5Z" fill="#3a2a25" stroke="#cf7f5c"/></svg>
<div class="t" style="left:343px;top:1360.64px;font-size:27px;line-height:32px;color:#8e8e2c;font-weight:400;letter-spacing:0.15px;font-family:'Liberation Sans', sans-serif;">classes</div>
<svg class="s" style="left:300px;top:1409px;" width="32" height="32" viewBox="0 0 16 16" fill="none"><path d="M4.2 6.2L8 10L11.8 6.2" stroke="#b0b3b9" stroke-width="0.9" stroke-linecap="round" stroke-linejoin="round"/></svg>
<svg class="s" style="left:342px;top:1408px;" width="32" height="32" viewBox="0 0 16 16" fill="none"><path d="M1.5 3.5C1.5 2.95 1.95 2.5 2.5 2.5H6.09C6.35 2.5 6.61 2.61 6.79 2.79L8.21 4.21C8.39 4.39 8.65 4.5 8.91 4.5H13.5C14.05 4.5 14.5 4.95 14.5 5.5V12.5C14.5 13.05 14.05 13.5 13.5 13.5H2.5C1.95 13.5 1.5 13.05 1.5 12.5V3.5Z" fill="#3a2a25" stroke="#cf7f5c"/></svg>
<div class="t" style="left:381px;top:1408.64px;font-size:27px;line-height:32px;color:#8e8e2c;font-weight:400;letter-spacing:0.15px;font-family:'Liberation Sans', sans-serif;">com</div>
<svg class="s" style="left:338px;top:1457px;" width="32" height="32" viewBox="0 0 16 16" fill="none"><path d="M4.2 6.2L8 10L11.8 6.2" stroke="#b0b3b9" stroke-width="0.9" stroke-linecap="round" stroke-linejoin="round"/></svg>
<svg class="s" style="left:380px;top:1456px;" width="32" height="32" viewBox="0 0 16 16" fill="none"><path d="M1.5 3.5C1.5 2.95 1.95 2.5 2.5 2.5H6.09C6.35 2.5 6.61 2.61 6.79 2.79L8.21 4.21C8.39 4.39 8.65 4.5 8.91 4.5H13.5C14.05 4.5 14.5 4.95 14.5 5.5V12.5C14.5 13.05 14.05 13.5 13.5 13.5H2.5C1.95 13.5 1.5 13.05 1.5 12.5V3.5Z" fill="#3a2a25" stroke="#cf7f5c"/></svg>
<div class="t" style="left:419px;top:1456.64px;font-size:27px;line-height:32px;color:#8e8e2c;font-weight:400;letter-spacing:0.15px;font-family:'Liberation Sans', sans-serif;"><span style="letter-spacing:1.75px">t</span>es<span style="letter-spacing:1.75px">t</span></div>
<svg class="s" style="left:376px;top:1505px;" width="32" height="32" viewBox="0 0 16 16" fill="none"><path d="M6.2 4.2L10 8L6.2 11.8" stroke="#b0b3b9" stroke-width="0.9" stroke-linecap="round" stroke-linejoin="round"/></svg>
<svg class="s" style="left:418px;top:1504px;" width="32" height="32" viewBox="0 0 16 16" fill="none"><path d="M1.5 3.5C1.5 2.95 1.95 2.5 2.5 2.5H6.09C6.35 2.5 6.61 2.61 6.79 2.79L8.21 4.21C8.39 4.39 8.65 4.5 8.91 4.5H13.5C14.05 4.5 14.5 4.95 14.5 5.5V12.5C14.5 13.05 14.05 13.5 13.5 13.5H2.5C1.95 13.5 1.5 13.05 1.5 12.5V3.5Z" fill="#3a2a25" stroke="#cf7f5c"/></svg>
<div class="t" style="left:457px;top:1504.64px;font-size:27px;line-height:32px;color:#8e8e2c;font-weight:400;letter-spacing:0.15px;font-family:'Liberation Sans', sans-serif;">en<span style="letter-spacing:1.75px">t</span>i<span style="letter-spacing:1.75px">t</span>y</div>
<svg class="s" style="left:376px;top:1553px;" width="32" height="32" viewBox="0 0 16 16" fill="none"><path d="M6.2 4.2L10 8L6.2 11.8" stroke="#b0b3b9" stroke-width="0.9" stroke-linecap="round" stroke-linejoin="round"/></svg>
<svg class="s" style="left:418px;top:1552px;" width="32" height="32" viewBox="0 0 16 16" fill="none"><path d="M1.5 3.5C1.5 2.95 1.95 2.5 2.5 2.5H6.09C6.35 2.5 6.61 2.61 6.79 2.79L8.21 4.21C8.39 4.39 8.65 4.5 8.91 4.5H13.5C14.05 4.5 14.5 4.95 14.5 5.5V12.5C14.5 13.05 14.05 13.5 13.5 13.5H2.5C1.95 13.5 1.5 13.05 1.5 12.5V3.5Z" fill="#3a2a25" stroke="#cf7f5c"/></svg>
<div class="t" style="left:457px;top:1552.64px;font-size:27px;line-height:32px;color:#8e8e2c;font-weight:400;letter-spacing:0.15px;font-family:'Liberation Sans', sans-serif;">mapper</div>
<svg class="s" style="left:418px;top:1600px;" width="32" height="32" viewBox="0 0 16 16" fill="none"><circle cx="8" cy="8" r="6.5" fill="#25324d" stroke="#548af7"/><path d="M10.6 6.2C10.1 5.2 9.2 4.6 8.1 4.6C6.4 4.6 5.1 6.1 5.1 8C5.1 9.9 6.4 11.4 8.1 11.4C9.2 11.4 10.1 10.8 10.6 9.8" stroke="#548af7" stroke-width="0.9"/></svg>
<div class="t" style="left:457px;top:1600.64px;font-size:27px;line-height:32px;color:#8e8e2c;font-weight:400;letter-spacing:0.15px;font-family:'Liberation Sans', sans-serif;">Main</div>
<svg class="s" style="left:342px;top:1648px;" width="32" height="32" viewBox="0 0 16 16" fill="none"><path d="M5 4.5L1.5 8L5 11.5M11 4.5L14.5 8L11 11.5M9.3 3L6.7 13" stroke="#e08855" stroke-width="1" stroke-linecap="round" stroke-linejoin="round"/></svg>
<div class="t" style="left:381px;top:1648.64px;font-size:27px;line-height:32px;color:#8e8e2c;font-weight:400;letter-spacing:0.15px;font-family:'Liberation Sans', sans-serif;">myba<span style="letter-spacing:1.75px">t</span>is<span style="letter-spacing:1.95px">-</span>config.xml</div>
<svg class="s" style="left:262px;top:1697px;" width="32" height="32" viewBox="0 0 16 16" fill="none"><path d="M6.2 4.2L10 8L6.2 11.8" stroke="#b0b3b9" stroke-width="0.9" stroke-linecap="round" stroke-linejoin="round"/></svg>
<svg class="s" style="left:304px;top:1696px;" width="32" height="32" viewBox="0 0 16 16" fill="none"><path d="M1.5 3.5C1.5 2.95 1.95 2.5 2.5 2.5H6.09C6.35 2.5 6.61 2.61 6.79 2.79L8.21 4.21C8.39 4.39 8.65 4.5 8.91 4.5H13.5C14.05 4.5 14.5 4.95 14.5 5.5V12.5C14.5 13.05 14.05 13.5 13.5 13.5H2.5C1.95 13.5 1.5 13.05 1.5 12.5V3.5Z" fill="#3a2a25" stroke="#cf7f5c"/></svg>
<div class="t" style="left:343px;top:1696.64px;font-size:27px;line-height:32px;color:#8e8e2c;font-weight:400;letter-spacing:0.15px;font-family:'Liberation Sans', sans-serif;">genera<span style="letter-spacing:1.75px">t</span>ed<span style="letter-spacing:1.95px">-</span>sources</div>
<svg class="s" style="left:262px;top:1745px;" width="32" height="32" viewBox="0 0 16 16" fill="none"><path d="M6.2 4.2L10 8L6.2 11.8" stroke="#b0b3b9" stroke-width="0.9" stroke-linecap="round" stroke-linejoin="round"/></svg>
<svg class="s" style="left:304px;top:1744px;" width="32" height="32" viewBox="0 0 16 16" fill="none"><path d="M1.5 3.5C1.5 2.95 1.95 2.5 2.5 2.5H6.09C6.35 2.5 6.61 2.61 6.79 2.79L8.21 4.21C8.39 4.39 8.65 4.5 8.91 4.5H13.5C14.05 4.5 14.5 4.95 14.5 5.5V12.5C14.5 13.05 14.05 13.5 13.5 13.5H2.5C1.95 13.5 1.5 13.05 1.5 12.5V3.5Z" fill="#3a2a25" stroke="#cf7f5c"/></svg>
<div class="t" style="left:343px;top:1744.64px;font-size:27px;line-height:32px;color:#8e8e2c;font-weight:400;letter-spacing:0.15px;font-family:'Liberation Sans', sans-serif;">genera<span style="letter-spacing:1.75px">t</span>ed<span style="letter-spacing:1.95px">-</span><span style="letter-spacing:1.75px">t</span>es<span style="letter-spacing:1.75px">t</span><span style="letter-spacing:1.95px">-</span>sources</div>
<svg class="s" style="left:262px;top:1793px;" width="32" height="32" viewBox="0 0 16 16" fill="none"><path d="M6.2 4.2L10 8L6.2 11.8" stroke="#b0b3b9" stroke-width="0.9" stroke-linecap="round" stroke-linejoin="round"/></svg>
<svg class="s" style="left:304px;top:1792px;" width="32" height="32" viewBox="0 0 16 16" fill="none"><path d="M1.5 3.5C1.5 2.95 1.95 2.5 2.5 2.5H6.09C6.35 2.5 6.61 2.61 6.79 2.79L8.21 4.21C8.39 4.39 8.65 4.5 8.91 4.5H13.5C14.05 4.5 14.5 4.95 14.5 5.5V12.5C14.5 13.05 14.05 13.5 13.5 13.5H2.5C1.95 13.5 1.5 13.05 1.5 12.5V3.5Z" fill="#3a2a25" stroke="#cf7f5c"/></svg>
<div class="t" style="left:343px;top:1792.64px;font-size:27px;line-height:32px;color:#8e8e2c;font-weight:400;letter-spacing:0.15px;font-family:'Liberation Sans', sans-serif;"><span style="letter-spacing:1.75px">t</span>es<span style="letter-spacing:1.75px">t</span><span style="letter-spacing:1.95px">-</span>classes</div>
<svg class="s" style="left:266px;top:1840px;" width="32" height="32" viewBox="0 0 16 16" fill="none"><circle cx="8" cy="8" r="6.5" fill="#393a3e" stroke="#ced0d6"/><path d="M3.5 12.5L12.5 3.5" stroke="#ced0d6"/></svg>
<div class="t" style="left:305px;top:1840.64px;font-size:27px;line-height:32px;color:#5c9f63;font-weight:400;letter-spacing:0.15px;font-family:'Liberation Sans', sans-serif;">.gi<span style="letter-spacing:1.75px">t</span>ignore</div>
<div class="t" style="left:266px;top:1879.33px;font-size:38px;line-height:46px;color:#548af7;font-weight:400;letter-spacing:0.0px;font-family:'Liberation Sans', sans-serif;font-style:italic">m</div>
<div class="t" style="left:305px;top:1888.64px;font-size:27px;line-height:32px;color:#5c9f63;font-weight:400;letter-spacing:0.15px;font-family:'Liberation Sans', sans-serif;">pom.xml</div>
<svg class="s" style="left:186px;top:1937px;" width="32" height="32" viewBox="0 0 16 16" fill="none"><path d="M4.2 6.2L8 10L11.8 6.2" stroke="#b0b3b9" stroke-width="0.9" stroke-linecap="round" stroke-linejoin="round"/></svg>
<svg class="s" style="left:228px;top:1936px;" width="32" height="32" viewBox="0 0 16 16" fill="none"><path d="M2.5 5.5H6.5V13.5H2.5Z M10.5 7H14.5V13.5H10.5Z" fill="#393a3e" stroke="#ced0d6" stroke-linejoin="round"/><path d="M6.5 2.5H10.5V13.5H6.5Z" fill="#393a3e" stroke="#ced0d6" stroke-linejoin="round"/></svg>
<div class="t" style="left:267px;top:1936.64px;font-size:27px;line-height:32px;color:#dfe1e5;font-weight:400;letter-spacing:0.15px;font-family:'Liberation Sans', sans-serif;">Ex<span style="letter-spacing:1.75px">t</span>ernal Libraries</div>
<div class="t" style="left:425px;top:256.64px;font-size:27px;line-height:32px;color:#868a91;font-weight:400;letter-spacing:0.15px;font-family:'Liberation Sans', sans-serif;">~/Desk<span style="letter-spacing:1.75px">t</span>op/CS/JavaEE/1 Ja</div>
<div class="r" style="left:748px;top:250px;width:28px;height:48px;background:#27282a;"></div>
<div class="r" style="left:754px;top:246px;width:16px;height:1595px;background:#3b3c3f;border-radius:8px"></div>
<div class="r" style="left:214px;top:1988px;width:216px;height:16px;background:#3b3c3f;border-radius:8px"></div>
<svg class="s" style="left:802px;top:183px;" width="32" height="32" viewBox="0 0 16 16" fill="none"><circle cx="8" cy="8" r="6.5" fill="#25324d" stroke="#548af7"/><path d="M10.6 6.2C10.1 5.2 9.2 4.6 8.1 4.6C6.4 4.6 5.1 6.1 5.1 8C5.1 9.9 6.4 11.4 8.1 11.4C9.2 11.4 10.1 10.8 10.6 9.8" stroke="#548af7" stroke-width="0.9"/></svg>
<div class="t" style="left:845px;top:182.64px;font-size:27px;line-height:32px;color:#d9625a;font-weight:400;letter-spacing:0.15px;font-family:'Liberation Sans', sans-serif;">Main.java</div>
<svg class="s" style="left:983px;top:190px;" width="18" height="18" viewBox="0 0 18 18" fill="none"><path d="M2 2L16 16M16 2L2 16" stroke="#8c8f96" stroke-width="2" stroke-linecap="round"/></svg>
<div class="r" style="left:778px;top:234px;width:246px;height:6px;background:#2a6ae6;border-radius:3px"></div>
<div class="t" style="left:1045px;top:173.33px;font-size:38px;line-height:46px;color:#548af7;font-weight:400;letter-spacing:0.0px;font-family:'Liberation Sans', sans-serif;font-style:italic">m</div>
<div class="t" style="left:1089px;top:182.64px;font-size:27px;line-height:32px;color:#5c9f63;font-weight:400;letter-spacing:0.1px;font-family:'Liberation Sans', sans-serif;">pom.xml (child1)</div>
<div class="r" style="left:2279.6px;top:185.6px;width:4.8px;height:4.8px;border-radius:3px;background:#ced0d6"></div>
<div class="r" style="left:2279.6px;top:195.9px;width:4.8px;height:4.8px;border-radius:3px;background:#ced0d6"></div>
<div class="r" style="left:2279.6px;top:206.2px;width:4.8px;height:4.8px;border-radius:3px;background:#ced0d6"></div>
<div class="r" style="left:1024px;top:238px;width:1298px;height:2px;background:#2e2f32;"></div>
<div class="r" style="left:778px;top:724px;width:1543px;height:44px;background:#232428;"></div>
<div class="r" style="left:922px;top:240px;width:2px;height:842px;background:#27282a;"></div>
<div class="r" style="left:1208.8px;top:416px;width:15.6px;height:44px;background:#3f4044;"></div>
<div class="r" style="left:928px;top:724px;width:15.6px;height:44px;background:#3f4044;"></div>
<div class="r" style="left:987.4px;top:504px;width:2px;height:176px;background:#2e3033;"></div>
<div class="t" style="left:739px;width:100px;text-align:right;top:243.60px;font-family:'Liberation Mono', monospace;font-size:24px;line-height:44px;color:#4b5059">1</div>
<div class="t" style="left:927.25px;top:243.40px;font-family:'Liberation Mono', monospace;font-size:28.5px;line-height:44px;letter-spacing:-1.500px;-webkit-text-stroke:0.35px currentColor"><span style="color:#cf8e6d;-webkit-text-stroke:0.35px #cf8e6d">package</span><span style="color:#bcbec4;-webkit-text-stroke:0.35px #bcbec4"> org.example;</span></div>
<div class="t" style="left:739px;width:100px;text-align:right;top:287.60px;font-family:'Liberation Mono', monospace;font-size:24px;line-height:44px;color:#4b5059">2</div>
<div class="t" style="left:739px;width:100px;text-align:right;top:331.60px;font-family:'Liberation Mono', monospace;font-size:24px;line-height:44px;color:#4b5059">3</div>
<div class="t" style="left:927.25px;top:331.40px;font-family:'Liberation Mono', monospace;font-size:28.5px;line-height:44px;letter-spacing:-1.500px;-webkit-text-stroke:0.35px currentColor"><span style="color:#7a7e85;-webkit-text-stroke:0.35px #7a7e85">// Press Shift twice to open the Search Everywhere dialog and type `show whitespaces`,</span></div>
<div class="t" style="left:739px;width:100px;text-align:right;top:375.60px;font-family:'Liberation Mono', monospace;font-size:24px;line-height:44px;color:#4b5059">4</div>
<div class="t" style="left:927.25px;top:375.40px;font-family:'Liberation Mono', monospace;font-size:28.5px;line-height:44px;letter-spacing:-1.500px;-webkit-text-stroke:0.35px currentColor"><span style="color:#7a7e85;-webkit-text-stroke:0.35px #7a7e85">// then press Enter. You can now see whitespace characters in your code.</span></div>
<div class="t" style="left:739px;width:100px;text-align:right;top:419.60px;font-family:'Liberation Mono', monospace;font-size:24px;line-height:44px;color:#4b5059">5</div>
<div class="t" style="left:927.25px;top:419.40px;font-family:'Liberation Mono', monospace;font-size:28.5px;line-height:44px;letter-spacing:-1.500px;-webkit-text-stroke:0.35px currentColor"><span style="color:#cf8e6d;-webkit-text-stroke:0.35px #cf8e6d">public</span><span style="color:#bcbec4;-webkit-text-stroke:0.35px #bcbec4"> </span><span style="color:#cf8e6d;-webkit-text-stroke:0.35px #cf8e6d">class</span><span style="color:#bcbec4;-webkit-text-stroke:0.35px #bcbec4"> Main {</span></div>
<div class="t" style="left:739px;width:100px;text-align:right;top:463.60px;font-family:'Liberation Mono', monospace;font-size:24px;line-height:44px;color:#4b5059">6</div>
<div class="t" style="left:927.25px;top:463.40px;font-family:'Liberation Mono', monospace;font-size:28.5px;line-height:44px;letter-spacing:-1.500px;-webkit-text-stroke:0.35px currentColor"><span style="color:#bcbec4;-webkit-text-stroke:0.35px #bcbec4">    </span><span style="color:#cf8e6d;-webkit-text-stroke:0.35px #cf8e6d">public</span><span style="color:#bcbec4;-webkit-text-stroke:0.35px #bcbec4"> </span><span style="color:#cf8e6d;-webkit-text-stroke:0.35px #cf8e6d">static</span><span style="color:#bcbec4;-webkit-text-stroke:0.35px #bcbec4"> </span><span style="color:#cf8e6d;-webkit-text-stroke:0.35px #cf8e6d">void</span><span style="color:#bcbec4;-webkit-text-stroke:0.35px #bcbec4"> </span><span style="color:#56a8f5;-webkit-text-stroke:0.35px #56a8f5">main</span><span style="color:#bcbec4;-webkit-text-stroke:0.35px #bcbec4">(String[] args) {</span></div>
<div class="t" style="left:739px;width:100px;text-align:right;top:507.60px;font-family:'Liberation Mono', monospace;font-size:24px;line-height:44px;color:#4b5059">7</div>
<div class="t" style="left:927.25px;top:507.40px;font-family:'Liberation Mono', monospace;font-size:28.5px;line-height:44px;letter-spacing:-1.500px;-webkit-text-stroke:0.35px currentColor"><span style="color:#7a7e85;-webkit-text-stroke:0.35px #7a7e85">        // Press Opt+Enter with your caret at the highlighted text to see how</span></div>
<div class="t" style="left:739px;width:100px;text-align:right;top:551.60px;font-family:'Liberation Mono', monospace;font-size:24px;line-height:44px;color:#4b5059">8</div>
<div class="t" style="left:927.25px;top:551.40px;font-family:'Liberation Mono', monospace;font-size:28.5px;line-height:44px;letter-spacing:-1.500px;-webkit-text-stroke:0.35px currentColor"><span style="color:#7a7e85;-webkit-text-stroke:0.35px #7a7e85">        // IntelliJ IDEA suggests fixing it.</span></div>
<div class="t" style="left:739px;width:100px;text-align:right;top:595.60px;font-family:'Liberation Mono', monospace;font-size:24px;line-height:44px;color:#4b5059">9</div>
<div class="t" style="left:927.25px;top:595.40px;font-family:'Liberation Mono', monospace;font-size:28.5px;line-height:44px;letter-spacing:-1.500px;-webkit-text-stroke:0.35px currentColor"><span style="color:#bcbec4;-webkit-text-stroke:0.35px #bcbec4">        Student </span><span style="color:#7a7e85;-webkit-text-stroke:0.35px #7a7e85">student</span><span style="color:#bcbec4;-webkit-text-stroke:0.35px #bcbec4"> = </span><span style="color:#cf8e6d;-webkit-text-stroke:0.35px #cf8e6d">new</span><span style="color:#bcbec4;-webkit-text-stroke:0.35px #bcbec4"> Student();</span></div>
<div class="t" style="left:739px;width:100px;text-align:right;top:639.60px;font-family:'Liberation Mono', monospace;font-size:24px;line-height:44px;color:#4b5059">10</div>
<div class="t" style="left:739px;width:100px;text-align:right;top:683.60px;font-family:'Liberation Mono', monospace;font-size:24px;line-height:44px;color:#4b5059">11</div>
<div class="t" style="left:927.25px;top:683.40px;font-family:'Liberation Mono', monospace;font-size:28.5px;line-height:44px;letter-spacing:-1.500px;-webkit-text-stroke:0.35px currentColor"><span style="color:#bcbec4;-webkit-text-stroke:0.35px #bcbec4">    }</span></div>
<div class="t" style="left:739px;width:100px;text-align:right;top:727.60px;font-family:'Liberation Mono', monospace;font-size:24px;line-height:44px;color:#a1a3ab">12</div>
<div class="t" style="left:927.25px;top:727.40px;font-family:'Liberation Mono', monospace;font-size:28.5px;line-height:44px;letter-spacing:-1.500px;-webkit-text-stroke:0.35px currentColor"><span style="color:#bcbec4;-webkit-text-stroke:0.35px #bcbec4">}</span></div>
<svg class="s" style="left:850px;top:424px;" width="28" height="28" viewBox="0 0 28 28" fill="none"><path d="M4 2.5V25.5L24.5 14Z" fill="#253627" stroke="#5fb865" stroke-width="2" stroke-linejoin="round"/></svg>
<svg class="s" style="left:850px;top:468px;" width="28" height="28" viewBox="0 0 28 28" fill="none"><path d="M4 2.5V25.5L24.5 14Z" fill="#253627" stroke="#5fb865" stroke-width="2" stroke-linejoin="round"/></svg>
<svg class="s" style="left:2182px;top:252px;" width="28" height="26" viewBox="0 0 28 26" fill="none"><path d="M14 2L26.5 24H1.5Z" fill="#d6a54c" stroke="#d6a54c" stroke-width="2" stroke-linejoin="round"/><path d="M14 9V16" stroke="#1c1d1f" stroke-width="2.6" stroke-linecap="round"/><circle cx="14" cy="20" r="1.6" fill="#1c1d1f"/></svg>
<div class="t" style="left:2214px;top:249.64px;font-size:27px;line-height:32px;color:#a8abb0;font-weight:400;letter-spacing:0.0px;font-family:'Liberation Sans', sans-serif;">1</div>
<svg class="s" style="left:2243px;top:258px;" width="22" height="16" viewBox="0 0 22 16" fill="none"><path d="M3 12L11 4L19 12" stroke="#a8abb0" stroke-width="2" stroke-linecap="round" stroke-linejoin="round"/></svg>
<svg class="s" style="left:2285px;top:258px;" width="22" height="16" viewBox="0 0 22 16" fill="none"><path d="M3 4L11 12L19 4" stroke="#a8abb0" stroke-width="2" stroke-linecap="round" stroke-linejoin="round"/></svg>
<div class="r" style="left:2292px;top:644px;width:28px;height:5px;background:#d6a54c;"></div>
<div class="r" style="left:778px;top:1082px;width:1543px;height:2px;background:#38393d;"></div>
<div class="t" style="left:802px;top:1100.33px;font-size:38px;line-height:46px;color:#548af7;font-weight:400;letter-spacing:0.0px;font-family:'Liberation Sans', sans-serif;font-style:italic">m</div>
<div class="t" style="left:845px;top:1110.64px;font-size:27px;line-height:32px;color:#5c9f63;font-weight:400;letter-spacing:0.1px;font-family:'Liberation Sans', sans-serif;">pom.xml (helloMaven)</div>
<div class="t" style="left:1201px;top:1100.33px;font-size:38px;line-height:46px;color:#548af7;font-weight:400;letter-spacing:0.0px;font-family:'Liberation Sans', sans-serif;font-style:italic">m</div>
<div class="t" style="left:1242px;top:1110.64px;font-size:27px;line-height:32px;color:#5c9f63;font-weight:400;letter-spacing:0.1px;font-family:'Liberation Sans', sans-serif;">pom.xml (child2)</div>
<svg class="s" style="left:1469px;top:1118px;" width="18" height="18" viewBox="0 0 18 18" fill="none"><path d="M2 2L16 16M16 2L2 16" stroke="#8c8f96" stroke-width="2" stroke-linecap="round"/></svg>
<div class="r" style="left:2279.6px;top:1113.1px;width:4.8px;height:4.8px;border-radius:3px;background:#ced0d6"></div>
<div class="r" style="left:2279.6px;top:1123.3999999999999px;width:4.8px;height:4.8px;border-radius:3px;background:#ced0d6"></div>
<div class="r" style="left:2279.6px;top:1133.6999999999998px;width:4.8px;height:4.8px;border-radius:3px;background:#ced0d6"></div>
<div class="r" style="left:778px;top:1166px;width:1543px;height:2px;background:#2e2f32;"></div>
<div class="r" style="left:1176px;top:1162px;width:333px;height:6px;background:#4e5157;border-radius:3px"></div>
<div style="position:absolute;left:776px;top:1168px;width:1546px;height:794px;overflow:hidden"><div style="position:absolute;left:-776px;top:-1168px;width:3078px;height:2218px">
<div class="r" style="left:778px;top:1474px;width:1543px;height:44px;background:#232428;"></div>
<div class="r" style="left:922px;top:1160px;width:2px;height:810px;background:#27282a;"></div>
<div class="r" style="left:1115.2px;top:1474px;width:140.4px;height:44px;background:#3d3f44;"></div>
<div class="r" style="left:1520.8px;top:1474px;width:156.0px;height:44px;background:#3d3f44;"></div>
<div class="r" style="left:987.4px;top:1122px;width:2px;height:176px;background:#2e3033;"></div>
<div class="r" style="left:987.4px;top:1430px;width:2px;height:440px;background:#2e3033;"></div>
<div class="r" style="left:1049.8px;top:1474px;width:2px;height:132px;background:#2e3033;"></div>
<div class="r" style="left:1049.8px;top:1694px;width:2px;height:132px;background:#2e3033;"></div>
<div class="t" style="left:739px;width:100px;text-align:right;top:1169.60px;font-family:'Liberation Mono', monospace;font-size:24px;line-height:44px;color:#4b5059">15</div>
<div class="t" style="left:927.25px;top:1169.40px;font-family:'Liberation Mono', monospace;font-size:28.5px;line-height:44px;letter-spacing:-1.500px;-webkit-text-stroke:0.35px currentColor"><span style="color:#bcbec4;-webkit-text-stroke:0.35px #bcbec4">        </span><span style="color:#d5b778;-webkit-text-stroke:0.35px #d5b778">&lt;maven.compiler.source&gt;</span><span style="color:#bcbec4;-webkit-text-stroke:0.35px #bcbec4">21</span><span style="color:#d5b778;-webkit-text-stroke:0.35px #d5b778">&lt;/maven.compiler.source&gt;</span></div>
<div class="t" style="left:739px;width:100px;text-align:right;top:1213.60px;font-family:'Liberation Mono', monospace;font-size:24px;line-height:44px;color:#4b5059">16</div>
<div class="t" style="left:927.25px;top:1213.40px;font-family:'Liberation Mono', monospace;font-size:28.5px;line-height:44px;letter-spacing:-1.500px;-webkit-text-stroke:0.35px currentColor"><span style="color:#bcbec4;-webkit-text-stroke:0.35px #bcbec4">        </span><span style="color:#d5b778;-webkit-text-stroke:0.35px #d5b778">&lt;maven.compiler.target&gt;</span><span style="color:#bcbec4;-webkit-text-stroke:0.35px #bcbec4">21</span><span style="color:#d5b778;-webkit-text-stroke:0.35px #d5b778">&lt;/maven.compiler.target&gt;</span></div>
<div class="t" style="left:739px;width:100px;text-align:right;top:1257.60px;font-family:'Liberation Mono', monospace;font-size:24px;line-height:44px;color:#4b5059">17</div>
<div class="t" style="left:927.25px;top:1257.40px;font-family:'Liberation Mono', monospace;font-size:28.5px;line-height:44px;letter-spacing:-1.500px;-webkit-text-stroke:0.35px currentColor"><span style="color:#bcbec4;-webkit-text-stroke:0.35px #bcbec4">        </span><span style="color:#d5b778;-webkit-text-stroke:0.35px #d5b778">&lt;project.build.sourceEncoding&gt;</span><span style="color:#bcbec4;-webkit-text-stroke:0.35px #bcbec4">UTF-8</span><span style="color:#d5b778;-webkit-text-stroke:0.35px #d5b778">&lt;/project.build.sourceEncoding&gt;</span></div>
<div class="t" style="left:739px;width:100px;text-align:right;top:1301.60px;font-family:'Liberation Mono', monospace;font-size:24px;line-height:44px;color:#4b5059">18</div>
<div class="t" style="left:927.25px;top:1301.40px;font-family:'Liberation Mono', monospace;font-size:28.5px;line-height:44px;letter-spacing:-1.500px;-webkit-text-stroke:0.35px currentColor"><span style="color:#bcbec4;-webkit-text-stroke:0.35px #bcbec4">    </span><span style="color:#d5b778;-webkit-text-stroke:0.35px #d5b778">&lt;/properties&gt;</span></div>
<div class="t" style="left:739px;width:100px;text-align:right;top:1345.60px;font-family:'Liberation Mono', monospace;font-size:24px;line-height:44px;color:#4b5059">19</div>
<div class="t" style="left:739px;width:100px;text-align:right;top:1389.60px;font-family:'Liberation Mono', monospace;font-size:24px;line-height:44px;color:#4b5059">20</div>
<div class="t" style="left:927.25px;top:1389.40px;font-family:'Liberation Mono', monospace;font-size:28.5px;line-height:44px;letter-spacing:-1.500px;-webkit-text-stroke:0.35px currentColor"><span style="color:#bcbec4;-webkit-text-stroke:0.35px #bcbec4">    </span><span style="color:#d5b778;-webkit-text-stroke:0.35px #d5b778">&lt;dependencies&gt;</span></div>
<div class="t" style="left:739px;width:100px;text-align:right;top:1433.60px;font-family:'Liberation Mono', monospace;font-size:24px;line-height:44px;color:#4b5059">21</div>
<div class="t" style="left:927.25px;top:1433.40px;font-family:'Liberation Mono', monospace;font-size:28.5px;line-height:44px;letter-spacing:-1.500px;-webkit-text-stroke:0.35px currentColor"><span style="color:#bcbec4;-webkit-text-stroke:0.35px #bcbec4">        </span><span style="color:#d5b778;-webkit-text-stroke:0.35px #d5b778">&lt;dependency&gt;</span></div>
<div class="t" style="left:739px;width:100px;text-align:right;top:1477.60px;font-family:'Liberation Mono', monospace;font-size:24px;line-height:44px;color:#a1a3ab">22</div>
<div class="t" style="left:927.25px;top:1477.40px;font-family:'Liberation Mono', monospace;font-size:28.5px;line-height:44px;letter-spacing:-1.500px;-webkit-text-stroke:0.35px currentColor"><span style="color:#bcbec4;-webkit-text-stroke:0.35px #bcbec4">            </span><span style="color:#d5b778;-webkit-text-stroke:0.35px #d5b778">&lt;groupId&gt;</span><span style="color:#bcbec4;-webkit-text-stroke:0.35px #bcbec4">org.projectlombok</span><span style="color:#d5b778;-webkit-text-stroke:0.35px #d5b778">&lt;/groupId&gt;</span></div>
<div class="t" style="left:739px;width:100px;text-align:right;top:1521.60px;font-family:'Liberation Mono', monospace;font-size:24px;line-height:44px;color:#4b5059">23</div>
<div class="t" style="left:927.25px;top:1521.40px;font-family:'Liberation Mono', monospace;font-size:28.5px;line-height:44px;letter-spacing:-1.500px;-webkit-text-stroke:0.35px currentColor"><span style="color:#bcbec4;-webkit-text-stroke:0.35px #bcbec4">            </span><span style="color:#d5b778;-webkit-text-stroke:0.35px #d5b778">&lt;artifactId&gt;</span><span style="color:#bcbec4;-webkit-text-stroke:0.35px #bcbec4">lombok</span><span style="color:#d5b778;-webkit-text-stroke:0.35px #d5b778">&lt;/artifactId&gt;</span></div>
<div class="t" style="left:739px;width:100px;text-align:right;top:1565.60px;font-family:'Liberation Mono', monospace;font-size:24px;line-height:44px;color:#4b5059">24</div>
<div class="t" style="left:927.25px;top:1565.40px;font-family:'Liberation Mono', monospace;font-size:28.5px;line-height:44px;letter-spacing:-1.500px;-webkit-text-stroke:0.35px currentColor"><span style="color:#bcbec4;-webkit-text-stroke:0.35px #bcbec4">            </span><span style="color:#d5b778;-webkit-text-stroke:0.35px #d5b778">&lt;scope&gt;</span><span style="color:#bcbec4;-webkit-text-stroke:0.35px #bcbec4">provided</span><span style="color:#d5b778;-webkit-text-stroke:0.35px #d5b778">&lt;/scope&gt;</span></div>
<div class="t" style="left:739px;width:100px;text-align:right;top:1609.60px;font-family:'Liberation Mono', monospace;font-size:24px;line-height:44px;color:#4b5059">25</div>
<div class="t" style="left:927.25px;top:1609.40px;font-family:'Liberation Mono', monospace;font-size:28.5px;line-height:44px;letter-spacing:-1.500px;-webkit-text-stroke:0.35px currentColor"><span style="color:#bcbec4;-webkit-text-stroke:0.35px #bcbec4">        </span><span style="color:#d5b778;-webkit-text-stroke:0.35px #d5b778">&lt;/dependency&gt;</span></div>
<div class="t" style="left:739px;width:100px;text-align:right;top:1653.60px;font-family:'Liberation Mono', monospace;font-size:24px;line-height:44px;color:#4b5059">26</div>
<div class="t" style="left:927.25px;top:1653.40px;font-family:'Liberation Mono', monospace;font-size:28.5px;line-height:44px;letter-spacing:-1.500px;-webkit-text-stroke:0.35px currentColor"><span style="color:#bcbec4;-webkit-text-stroke:0.35px #bcbec4">        </span><span style="color:#d5b778;-webkit-text-stroke:0.35px #d5b778">&lt;dependency&gt;</span></div>
<div class="t" style="left:739px;width:100px;text-align:right;top:1697.60px;font-family:'Liberation Mono', monospace;font-size:24px;line-height:44px;color:#4b5059">27</div>
<div class="t" style="left:927.25px;top:1697.40px;font-family:'Liberation Mono', monospace;font-size:28.5px;line-height:44px;letter-spacing:-1.500px;-webkit-text-stroke:0.35px currentColor"><span style="color:#bcbec4;-webkit-text-stroke:0.35px #bcbec4">            </span><span style="color:#d5b778;-webkit-text-stroke:0.35px #d5b778">&lt;groupId&gt;</span><span style="color:#bcbec4;-webkit-text-stroke:0.35px #bcbec4">org.example</span><span style="color:#d5b778;-webkit-text-stroke:0.35px #d5b778">&lt;/groupId&gt;</span></div>
<div class="t" style="left:739px;width:100px;text-align:right;top:1741.60px;font-family:'Liberation Mono', monospace;font-size:24px;line-height:44px;color:#4b5059">28</div>
<div class="t" style="left:927.25px;top:1741.40px;font-family:'Liberation Mono', monospace;font-size:28.5px;line-height:44px;letter-spacing:-1.500px;-webkit-text-stroke:0.35px currentColor"><span style="color:#bcbec4;-webkit-text-stroke:0.35px #bcbec4">            </span><span style="color:#d5b778;-webkit-text-stroke:0.35px #d5b778">&lt;artifactId&gt;</span><span style="color:#bcbec4;-webkit-text-stroke:0.35px #bcbec4">child1</span><span style="color:#d5b778;-webkit-text-stroke:0.35px #d5b778">&lt;/artifactId&gt;</span></div>
<div class="t" style="left:739px;width:100px;text-align:right;top:1785.60px;font-family:'Liberation Mono', monospace;font-size:24px;line-height:44px;color:#4b5059">29</div>
<div class="t" style="left:927.25px;top:1785.40px;font-family:'Liberation Mono', monospace;font-size:28.5px;line-height:44px;letter-spacing:-1.500px;-webkit-text-stroke:0.35px currentColor"><span style="color:#bcbec4;-webkit-text-stroke:0.35px #bcbec4">            </span><span style="color:#d5b778;-webkit-text-stroke:0.35px #d5b778">&lt;version&gt;</span><span style="color:#bcbec4;-webkit-text-stroke:0.35px #bcbec4">1.0-SNAPSHOT</span><span style="color:#d5b778;-webkit-text-stroke:0.35px #d5b778">&lt;/version&gt;</span></div>
<div class="t" style="left:739px;width:100px;text-align:right;top:1829.60px;font-family:'Liberation Mono', monospace;font-size:24px;line-height:44px;color:#4b5059">30</div>
<div class="t" style="left:927.25px;top:1829.40px;font-family:'Liberation Mono', monospace;font-size:28.5px;line-height:44px;letter-spacing:-1.500px;-webkit-text-stroke:0.35px currentColor"><span style="color:#bcbec4;-webkit-text-stroke:0.35px #bcbec4">        </span><span style="color:#d5b778;-webkit-text-stroke:0.35px #d5b778">&lt;/dependency&gt;</span></div>
<div class="t" style="left:739px;width:100px;text-align:right;top:1873.60px;font-family:'Liberation Mono', monospace;font-size:24px;line-height:44px;color:#4b5059">31</div>
<div class="t" style="left:927.25px;top:1873.40px;font-family:'Liberation Mono', monospace;font-size:28.5px;line-height:44px;letter-spacing:-1.500px;-webkit-text-stroke:0.35px currentColor"><span style="color:#bcbec4;-webkit-text-stroke:0.35px #bcbec4">    </span><span style="color:#d5b778;-webkit-text-stroke:0.35px #d5b778">&lt;/dependencies&gt;</span></div>
<div class="t" style="left:739px;width:100px;text-align:right;top:1917.60px;font-family:'Liberation Mono', monospace;font-size:24px;line-height:44px;color:#4b5059">32</div>
<svg class="s" style="left:848px;top:1436px;" width="32" height="32" viewBox="0 0 32 32" fill="none"><circle cx="12" cy="18" r="9" stroke="#548af7" stroke-width="2.2"/><circle cx="12" cy="18" r="4" stroke="#548af7" stroke-width="2.2"/><path d="M23 15V2M18.5 6.5L23 2L27.5 6.5" stroke="#e55757" stroke-width="2" stroke-linecap="round" stroke-linejoin="round"/></svg>
</div></div>
<svg class="s" style="left:2278px;top:1182px;" width="30" height="24" viewBox="0 0 30 24" fill="none"><path d="M3 12L10 19L27 3" stroke="#5fb865" stroke-width="3" stroke-linecap="round" stroke-linejoin="round"/></svg>
<div class="r" style="left:2298px;top:1488px;width:16px;height:316px;background:#3b3c3f;border-radius:8px"></div>
<div class="r" style="left:928px;top:1934px;width:1393px;height:28px;background:#27282a;"></div>
<div class="r" style="left:934px;top:1940px;width:1110px;height:16px;background:#4e5157;border-radius:8px"></div>
<div class="r" style="left:778px;top:1962px;width:1543px;height:2px;background:#27282a;"></div>
<div class="t" style="left:799px;top:1970.64px;font-size:27px;line-height:32px;color:#a8abb0;font-weight:400;letter-spacing:0.15px;font-family:'Liberation Sans', sans-serif;">projec<span style="letter-spacing:1.75px">t</span></div>
<div class="t" style="left:932px;top:1970.64px;font-size:27px;line-height:32px;color:#a8abb0;font-weight:400;letter-spacing:0.15px;font-family:'Liberation Sans', sans-serif;">dependencies</div>
<div class="t" style="left:1155px;top:1970.64px;font-size:27px;line-height:32px;color:#a8abb0;font-weight:400;letter-spacing:0.15px;font-family:'Liberation Sans', sans-serif;">dependency</div>
<div class="t" style="left:1354px;top:1970.64px;font-size:27px;line-height:32px;color:#a8abb0;font-weight:400;letter-spacing:0.15px;font-family:'Liberation Sans', sans-serif;">groupId</div>
<svg class="s" style="left:904px;top:1978px;" width="12" height="18" viewBox="0 0 12 18" fill="none"><path d="M3 3L9 9L3 15" stroke="#5a5d63" stroke-width="1.8" stroke-linecap="round" stroke-linejoin="round"/></svg>
<svg class="s" style="left:1126px;top:1978px;" width="12" height="18" viewBox="0 0 12 18" fill="none"><path d="M3 3L9 9L3 15" stroke="#5a5d63" stroke-width="1.8" stroke-linecap="round" stroke-linejoin="round"/></svg>
<svg class="s" style="left:1326px;top:1978px;" width="12" height="18" viewBox="0 0 12 18" fill="none"><path d="M3 3L9 9L3 15" stroke="#5a5d63" stroke-width="1.8" stroke-linecap="round" stroke-linejoin="round"/></svg>
<div class="t" style="left:2346px;top:183.14px;font-size:27px;line-height:32px;color:#dfe1e5;font-weight:700;letter-spacing:-0.1px;font-family:'Liberation Sans', sans-serif;">Maven</div>
<div class="r" style="left:2322px;top:238px;width:562px;height:2px;background:#1c1d1f;"></div>
<svg class="s" style="left:2342px;top:256px;" width="40" height="32" viewBox="0 0 40 32" fill="none"><path d="M9 17A11.5 11.5 0 0 1 28 7.5M31 15A11.5 11.5 0 0 1 12 24.5" stroke="#ced0d6" stroke-width="2.3" stroke-linecap="round"/><path d="M4 13.5L9 18.5L14 13.5M26 18.5L31 13.5L36 18.5" stroke="#ced0d6" stroke-width="2.3" stroke-linecap="round" stroke-linejoin="round"/></svg>
<svg class="s" style="left:2398px;top:256px;" width="40" height="36" viewBox="0 0 40 36" fill="none"><path d="M3.5 6C3.5 4.6 4.6 3.5 6 3.5H13L17.5 8H28C29.4 8 30.5 9.1 30.5 10.5V14M14 27.5H6C4.6 27.5 3.5 26.4 3.5 25V6" stroke="#ced0d6" stroke-width="2.3" stroke-linejoin="round"/><path d="M18 21.5C18.8 18 21.5 16 24.5 16C27 16 29 17.2 30 19M31 26C30.2 29.5 27.5 31.5 24.5 31.5C22 31.5 20 30.3 19 28.5" stroke="#548af7" stroke-width="2.3" stroke-linecap="round"/><path d="M17 18.5V22.5H21M32 29V25H28" stroke="#548af7" stroke-width="2.3" stroke-linecap="round" stroke-linejoin="round"/></svg>
<svg class="s" style="left:2450px;top:256px;" width="38" height="38" viewBox="0 0 38 38" fill="none"><path d="M16 3.5V21M9.5 15L16 21.5L22.5 15" stroke="#ced0d6" stroke-width="2.3" stroke-linecap="round" stroke-linejoin="round"/><path d="M4.5 20V27.5H28V20" stroke="#ced0d6" stroke-width="2.3"/><path d="M34 26V34H26Z" fill="#ced0d6"/></svg>
<div class="r" style="left:2498px;top:252px;width:2px;height:40px;background:#3f4044;"></div>
<svg class="s" style="left:2516px;top:256px;" width="30" height="30" viewBox="0 0 30 30" fill="none"><path d="M15 2V28M2 15H28" stroke="#ced0d6" stroke-width="2.3"/></svg>
<div class="r" style="left:2564px;top:252px;width:2px;height:40px;background:#3f4044;"></div>
<svg class="s" style="left:2584px;top:256px;" width="30" height="32" viewBox="0 0 30 32" fill="none"><path d="M5 5.5C5 3.5 7 2.5 8.7 3.5L26.5 14C28 15 28 17 26.5 18L8.7 28.5C7 29.5 5 28.5 5 26.5Z" fill="#55575c"/></svg>
<svg class="s" style="left:2634px;top:258px;" width="34" height="28" viewBox="0 0 34 28" fill="none"><rect x="2.5" y="2.5" width="27" height="23" rx="4" stroke="#ced0d6" stroke-width="2.3"/><path d="M2.5 9H29.5" stroke="#ced0d6" stroke-width="2.3"/><path d="M8 13.5V22L15 17.75Z" stroke="#ced0d6" stroke-width="2.1" stroke-linejoin="round"/></svg>
<svg class="s" style="left:2684px;top:256px;" width="38" height="32" viewBox="0 0 38 32" fill="none"><path d="M9 10C6 11 4 13.5 4 16.5C4 20.3 7 23 10.5 23H22M28 21.5C30 20.5 31.3 18.5 31.3 16.2C31.3 13 29 10.8 26 10.5C25 6.5 21.5 3.5 17.3 3.5C15.3 3.5 13.5 4.2 12 5.3" stroke="#ced0d6" stroke-width="2.3" stroke-linecap="round"/><path d="M5 3L29 28" stroke="#ced0d6" stroke-width="2.3" stroke-linecap="round"/></svg>
<svg class="s" style="left:2738px;top:256px;" width="32" height="32" viewBox="0 0 32 32" fill="none"><circle cx="16" cy="16" r="13" stroke="#ced0d6" stroke-width="2.3"/><path d="M7 25L25 7" stroke="#ced0d6" stroke-width="2.3"/></svg>
<svg class="s" style="left:2795px;top:257px;" width="22" height="30" viewBox="0 0 22 30" fill="none"><path d="M3 3L11 10.5L19 3M3 27L11 19.5L19 27" stroke="#ced0d6" stroke-width="2.3" stroke-linecap="round" stroke-linejoin="round"/></svg>
<svg class="s" style="left:2844px;top:262px;" width="16" height="20" viewBox="0 0 16 20" fill="none"><path d="M3 2L11 10L3 18" stroke="#ced0d6" stroke-width="2.3" stroke-linecap="round" stroke-linejoin="round"/></svg>
<div class="r" style="left:2346px;top:506px;width:514px;height:47px;background:#38393d;border-radius:9px"></div>
<svg class="s" style="left:2345px;top:322px;" width="32" height="32" viewBox="0 0 16 16" fill="none"><path d="M6.2 4.2L10 8L6.2 11.8" stroke="#b0b3b9" stroke-width="0.9" stroke-linecap="round" stroke-linejoin="round"/></svg>
<div class="t" style="left:2388px;top:312.33px;font-size:38px;line-height:46px;color:#548af7;font-weight:400;letter-spacing:0.0px;font-family:'Liberation Sans', sans-serif;font-style:italic">m</div>
<div class="t" style="left:2427px;top:321.64px;font-size:27px;line-height:32px;color:#dfe1e5;font-weight:400;letter-spacing:0.15px;font-family:'Liberation Sans', sans-serif;">child1</div>
<svg class="s" style="left:2345px;top:370px;" width="32" height="32" viewBox="0 0 16 16" fill="none"><path d="M4.2 6.2L8 10L11.8 6.2" stroke="#b0b3b9" stroke-width="0.9" stroke-linecap="round" stroke-linejoin="round"/></svg>
<div class="t" style="left:2388px;top:360.33px;font-size:38px;line-height:46px;color:#548af7;font-weight:400;letter-spacing:0.0px;font-family:'Liberation Sans', sans-serif;font-style:italic">m</div>
<div class="t" style="left:2427px;top:369.64px;font-size:27px;line-height:32px;color:#dfe1e5;font-weight:400;letter-spacing:0.15px;font-family:'Liberation Sans', sans-serif;">child2</div>
<svg class="s" style="left:2383px;top:418px;" width="32" height="32" viewBox="0 0 16 16" fill="none"><path d="M6.2 4.2L10 8L6.2 11.8" stroke="#b0b3b9" stroke-width="0.9" stroke-linecap="round" stroke-linejoin="round"/></svg>
<svg class="s" style="left:2426px;top:417px;" width="32" height="32" viewBox="0 0 16 16" fill="none"><path d="M1.5 3.5C1.5 2.95 1.95 2.5 2.5 2.5H6.09C6.35 2.5 6.61 2.61 6.79 2.79L8.21 4.21C8.39 4.39 8.65 4.5 8.91 4.5H13.5C14.05 4.5 14.5 4.95 14.5 5.5V12.5C14.5 13.05 14.05 13.5 13.5 13.5H2.5C1.95 13.5 1.5 13.05 1.5 12.5V3.5Z" fill="#393a3e" stroke="#ced0d6"/><circle cx="12" cy="12" r="4.9" fill="#27282a"/><path d="M16.40 12.00 L16.25 13.14 L14.86 13.65 L14.33 14.33 L14.20 15.81 L13.14 16.25 L12.00 15.30 L11.15 15.19 L9.80 15.81 L8.89 15.11 L9.14 13.65 L8.81 12.85 L7.60 12.00 L7.75 10.86 L9.14 10.35 L9.67 9.67 L9.80 8.19 L10.86 7.75 L12.00 8.70 L12.85 8.81 L14.20 8.19 L15.11 8.89 L14.86 10.35 L15.19 11.15Z" fill="#25324d" stroke="#548af7" stroke-width="0.95" stroke-linejoin="round"/><circle cx="12" cy="12" r="1.2" stroke="#548af7" stroke-width="0.9"/></svg>
<div class="t" style="left:2465px;top:417.64px;font-size:27px;line-height:32px;color:#dfe1e5;font-weight:400;letter-spacing:0.15px;font-family:'Liberation Sans', sans-serif;">Lifecycle</div>
<svg class="s" style="left:2383px;top:466px;" width="32" height="32" viewBox="0 0 16 16" fill="none"><path d="M6.2 4.2L10 8L6.2 11.8" stroke="#b0b3b9" stroke-width="0.9" stroke-linecap="round" stroke-linejoin="round"/></svg>
<svg class="s" style="left:2426px;top:465px;" width="32" height="32" viewBox="0 0 16 16" fill="none"><path d="M1.5 3.5C1.5 2.95 1.95 2.5 2.5 2.5H6.09C6.35 2.5 6.61 2.61 6.79 2.79L8.21 4.21C8.39 4.39 8.65 4.5 8.91 4.5H13.5C14.05 4.5 14.5 4.95 14.5 5.5V12.5C14.5 13.05 14.05 13.5 13.5 13.5H2.5C1.95 13.5 1.5 13.05 1.5 12.5V3.5Z" fill="#393a3e" stroke="#ced0d6"/><circle cx="12" cy="12" r="4.9" fill="#27282a"/><path d="M16.40 12.00 L16.25 13.14 L14.86 13.65 L14.33 14.33 L14.20 15.81 L13.14 16.25 L12.00 15.30 L11.15 15.19 L9.80 15.81 L8.89 15.11 L9.14 13.65 L8.81 12.85 L7.60 12.00 L7.75 10.86 L9.14 10.35 L9.67 9.67 L9.80 8.19 L10.86 7.75 L12.00 8.70 L12.85 8.81 L14.20 8.19 L15.11 8.89 L14.86 10.35 L15.19 11.15Z" fill="#25324d" stroke="#548af7" stroke-width="0.95" stroke-linejoin="round"/><circle cx="12" cy="12" r="1.2" stroke="#548af7" stroke-width="0.9"/></svg>
<div class="t" style="left:2465px;top:465.64px;font-size:27px;line-height:32px;color:#dfe1e5;font-weight:400;letter-spacing:0.15px;font-family:'Liberation Sans', sans-serif;">Plugins</div>
<svg class="s" style="left:2383px;top:514px;" width="32" height="32" viewBox="0 0 16 16" fill="none"><path d="M6.2 4.2L10 8L6.2 11.8" stroke="#b0b3b9" stroke-width="0.9" stroke-linecap="round" stroke-linejoin="round"/></svg>
<svg class="s" style="left:2426px;top:513px;" width="32" height="32" viewBox="0 0 16 16" fill="none"><path d="M1.5 3.5C1.5 2.95 1.95 2.5 2.5 2.5H6.09C6.35 2.5 6.61 2.61 6.79 2.79L8.21 4.21C8.39 4.39 8.65 4.5 8.91 4.5H13.5C14.05 4.5 14.5 4.95 14.5 5.5V12.5C14.5 13.05 14.05 13.5 13.5 13.5H2.5C1.95 13.5 1.5 13.05 1.5 12.5V3.5Z" fill="#393a3e" stroke="#ced0d6"/><path d="M7.3 16.3V9.6H9.6V8H13.7V9.9H15.9V16.3Z" fill="#38393d"/><path d="M8.5 15.2V10.5H10.5V15.2Z M12.8 15.2V11H14.8V15.2Z" fill="#25324d" stroke="#548af7" stroke-width="0.95" stroke-linejoin="round"/><path d="M10.5 15.2V9H12.8V15.2Z" fill="#25324d" stroke="#548af7" stroke-width="0.95" stroke-linejoin="round"/></svg>
<div class="t" style="left:2465px;top:513.64px;font-size:27px;line-height:32px;color:#dfe1e5;font-weight:400;letter-spacing:0.15px;font-family:'Liberation Sans', sans-serif;">Dependencies</div>
<svg class="s" style="left:2345px;top:562px;" width="32" height="32" viewBox="0 0 16 16" fill="none"><path d="M4.2 6.2L8 10L11.8 6.2" stroke="#b0b3b9" stroke-width="0.9" stroke-linecap="round" stroke-linejoin="round"/></svg>
<div class="t" style="left:2388px;top:552.33px;font-size:38px;line-height:46px;color:#548af7;font-weight:400;letter-spacing:0.0px;font-family:'Liberation Sans', sans-serif;font-style:italic">m</div>
<div class="t" style="left:2427px;top:561.64px;font-size:27px;line-height:32px;color:#dfe1e5;font-weight:400;letter-spacing:0.15px;font-family:'Liberation Sans', sans-serif;">helloMaven</div>
<svg class="s" style="left:2383px;top:610px;" width="32" height="32" viewBox="0 0 16 16" fill="none"><path d="M6.2 4.2L10 8L6.2 11.8" stroke="#b0b3b9" stroke-width="0.9" stroke-linecap="round" stroke-linejoin="round"/></svg>
<svg class="s" style="left:2426px;top:609px;" width="32" height="32" viewBox="0 0 16 16" fill="none"><path d="M1.5 3.5C1.5 2.95 1.95 2.5 2.5 2.5H6.09C6.35 2.5 6.61 2.61 6.79 2.79L8.21 4.21C8.39 4.39 8.65 4.5 8.91 4.5H13.5C14.05 4.5 14.5 4.95 14.5 5.5V12.5C14.5 13.05 14.05 13.5 13.5 13.5H2.5C1.95 13.5 1.5 13.05 1.5 12.5V3.5Z" fill="#393a3e" stroke="#ced0d6"/><circle cx="12" cy="12" r="4.9" fill="#27282a"/><path d="M16.40 12.00 L16.25 13.14 L14.86 13.65 L14.33 14.33 L14.20 15.81 L13.14 16.25 L12.00 15.30 L11.15 15.19 L9.80 15.81 L8.89 15.11 L9.14 13.65 L8.81 12.85 L7.60 12.00 L7.75 10.86 L9.14 10.35 L9.67 9.67 L9.80 8.19 L10.86 7.75 L12.00 8.70 L12.85 8.81 L14.20 8.19 L15.11 8.89 L14.86 10.35 L15.19 11.15Z" fill="#25324d" stroke="#548af7" stroke-width="0.95" stroke-linejoin="round"/><circle cx="12" cy="12" r="1.2" stroke="#548af7" stroke-width="0.9"/></svg>
<div class="t" style="left:2465px;top:609.64px;font-size:27px;line-height:32px;color:#dfe1e5;font-weight:400;letter-spacing:0.15px;font-family:'Liberation Sans', sans-serif;">Lifecycle</div>
<svg class="s" style="left:2383px;top:658px;" width="32" height="32" viewBox="0 0 16 16" fill="none"><path d="M6.2 4.2L10 8L6.2 11.8" stroke="#b0b3b9" stroke-width="0.9" stroke-linecap="round" stroke-linejoin="round"/></svg>
<svg class="s" style="left:2426px;top:657px;" width="32" height="32" viewBox="0 0 16 16" fill="none"><path d="M1.5 3.5C1.5 2.95 1.95 2.5 2.5 2.5H6.09C6.35 2.5 6.61 2.61 6.79 2.79L8.21 4.21C8.39 4.39 8.65 4.5 8.91 4.5H13.5C14.05 4.5 14.5 4.95 14.5 5.5V12.5C14.5 13.05 14.05 13.5 13.5 13.5H2.5C1.95 13.5 1.5 13.05 1.5 12.5V3.5Z" fill="#393a3e" stroke="#ced0d6"/><circle cx="12" cy="12" r="4.9" fill="#27282a"/><path d="M16.40 12.00 L16.25 13.14 L14.86 13.65 L14.33 14.33 L14.20 15.81 L13.14 16.25 L12.00 15.30 L11.15 15.19 L9.80 15.81 L8.89 15.11 L9.14 13.65 L8.81 12.85 L7.60 12.00 L7.75 10.86 L9.14 10.35 L9.67 9.67 L9.80 8.19 L10.86 7.75 L12.00 8.70 L12.85 8.81 L14.20 8.19 L15.11 8.89 L14.86 10.35 L15.19 11.15Z" fill="#25324d" stroke="#548af7" stroke-width="0.95" stroke-linejoin="round"/><circle cx="12" cy="12" r="1.2" stroke="#548af7" stroke-width="0.9"/></svg>
<div class="t" style="left:2465px;top:657.64px;font-size:27px;line-height:32px;color:#dfe1e5;font-weight:400;letter-spacing:0.15px;font-family:'Liberation Sans', sans-serif;">Plugins</div>
<div class="t" style="left:2576px;top:561.64px;font-size:27px;line-height:32px;color:#868a91;font-weight:400;letter-spacing:0.15px;font-family:'Liberation Sans', sans-serif;">(roo<span style="letter-spacing:1.75px">t</span>)</div>
<svg class="s" style="left:2906px;top:176px;" width="40" height="42" viewBox="0 0 40 42" fill="none"><path d="M9 28V17C9 10.5 13.5 6 20 6C26.5 6 31 10.5 31 17V28L34 32H6Z" stroke="#ced0d6" stroke-width="2.4" stroke-linejoin="round"/><path d="M16.5 35.5C17 37.5 18.3 38.5 20 38.5C21.7 38.5 23 37.5 23.5 35.5Z" fill="#ced0d6"/></svg>
<div class="r" style="left:2930px;top:176.5px;width:18px;height:18px;border-radius:9px;background:#e55757;box-shadow:0 0 0 2.5px #27282a"></div>
<svg class="s" style="left:2906px;top:258px;" width="40" height="40" viewBox="0 0 40 40" fill="none"><ellipse cx="20" cy="8.5" rx="14" ry="5.5" stroke="#ced0d6" stroke-width="2.4"/><path d="M6 8.5V31C6 34 12 36.5 20 36.5C28 36.5 34 34 34 31V8.5M6 16C6 19 12 21.5 20 21.5C28 21.5 34 19 34 16M6 23.5C6 26.5 12 29 20 29C28 29 34 26.5 34 23.5" stroke="#ced0d6" stroke-width="2.4"/></svg>
<svg class="s" style="left:2906px;top:340px;" width="40" height="40" viewBox="0 0 40 40" fill="none"><defs><linearGradient id="msg" x1="0" y1="1" x2="0.2" y2="0"><stop offset="0" stop-color="#0a6cf5"/><stop offset="1" stop-color="#19a8ff"/></linearGradient></defs><path d="M20 2.5C29.7 2.5 37.5 9.8 37.5 18.5C37.5 27.2 29.7 34.5 20 34.5C17.8 34.5 15.8 34.1 13.9 33.5L6 37.5L6.8 30.3C4 27.4 2.5 23.2 2.5 18.5C2.5 9.8 10.3 2.5 20 2.5Z" fill="url(#msg)"/><circle cx="16" cy="18" r="2" fill="#27282a"/><circle cx="24" cy="18" r="2" fill="#27282a"/></svg>
<svg class="s" style="left:2906px;top:418px;" width="40" height="40" viewBox="-1 -1 26 26" fill="none"><path d="M22.2819 9.8211a5.9847 5.9847 0 0 0-.5157-4.9108 6.0462 6.0462 0 0 0-6.5098-2.9A6.0651 6.0651 0 0 0 4.9807 4.1818a5.9847 5.9847 0 0 0-3.9977 2.9 6.0462 6.0462 0 0 0 .7427 7.0966 5.98 5.98 0 0 0 .511 4.9107 6.051 6.051 0 0 0 6.5146 2.9001A5.9847 5.9847 0 0 0 13.2599 24a6.0557 6.0557 0 0 0 5.7718-4.2058 5.9894 5.9894 0 0 0 3.9977-2.9001 6.0557 6.0557 0 0 0-.7475-7.0729zm-9.022 12.6081a4.4755 4.4755 0 0 1-2.8764-1.0408l.1419-.0804 4.7783-2.7582a.7948.7948 0 0 0 .3927-.6813v-6.7369l2.02 1.1686a.071.071 0 0 1 .038.052v5.5826a4.504 4.504 0 0 1-4.4945 4.4944zm-9.6607-4.1254a4.4708 4.4708 0 0 1-.5346-3.0137l.142.0852 4.783 2.7582a.7712.7712 0 0 0 .7806 0l5.8428-3.3685v2.3324a.0804.0804 0 0 1-.0332.0615L9.74 19.9502a4.4992 4.4992 0 0 1-6.1408-1.6464zM2.3408 7.8956a4.485 4.485 0 0 1 2.3655-1.9728V11.6a.7664.7664 0 0 0 .3879.6765l5.8144 3.3543-2.0201 1.1685a.0757.0757 0 0 1-.071 0l-4.8303-2.7865A4.504 4.504 0 0 1 2.3408 7.872zm16.5963 3.8558L13.1038 8.364 15.1192 7.2a.0757.0757 0 0 1 .071 0l4.8303 2.7913a4.4944 4.4944 0 0 1-.6765 8.1042v-5.6772a.79.79 0 0 0-.407-.667zm2.0107-3.0231l-.142-.0852-4.7735-2.7818a.7759.7759 0 0 0-.7854 0L9.409 9.2297V6.8974a.0662.0662 0 0 1 .0284-.0615l4.8303-2.7866a4.4992 4.4992 0 0 1 6.6802 4.66zM8.3065 12.863l-2.02-1.1638a.0804.0804 0 0 1-.038-.0567V6.0742a4.4992 4.4992 0 0 1 7.3757-3.4537l-.142.0805L8.704 5.459a.7948.7948 0 0 0-.3927.6813zm1.0976-2.3654l2.602-1.4998 2.6069 1.4998v2.9994l-2.5974 1.4997-2.6067-1.4997Z" fill="#fff" stroke="#000" stroke-width="0.9" stroke-linejoin="round" paint-order="stroke"/><path d="M22.2819 9.8211a5.9847 5.9847 0 0 0-.5157-4.9108 6.0462 6.0462 0 0 0-6.5098-2.9A6.0651 6.0651 0 0 0 4.9807 4.1818a5.9847 5.9847 0 0 0-3.9977 2.9 6.0462 6.0462 0 0 0 .7427 7.0966 5.98 5.98 0 0 0 .511 4.9107 6.051 6.051 0 0 0 6.5146 2.9001A5.9847 5.9847 0 0 0 13.2599 24a6.0557 6.0557 0 0 0 5.7718-4.2058 5.9894 5.9894 0 0 0 3.9977-2.9001 6.0557 6.0557 0 0 0-.7475-7.0729zm-9.022 12.6081a4.4755 4.4755 0 0 1-2.8764-1.0408l.1419-.0804 4.7783-2.7582a.7948.7948 0 0 0 .3927-.6813v-6.7369l2.02 1.1686a.071.071 0 0 1 .038.052v5.5826a4.504 4.504 0 0 1-4.4945 4.4944zm-9.6607-4.1254a4.4708 4.4708 0 0 1-.5346-3.0137l.142.0852 4.783 2.7582a.7712.7712 0 0 0 .7806 0l5.8428-3.3685v2.3324a.0804.0804 0 0 1-.0332.0615L9.74 19.9502a4.4992 4.4992 0 0 1-6.1408-1.6464zM2.3408 7.8956a4.485 4.485 0 0 1 2.3655-1.9728V11.6a.7664.7664 0 0 0 .3879.6765l5.8144 3.3543-2.0201 1.1685a.0757.0757 0 0 1-.071 0l-4.8303-2.7865A4.504 4.504 0 0 1 2.3408 7.872zm16.5963 3.8558L13.1038 8.364 15.1192 7.2a.0757.0757 0 0 1 .071 0l4.8303 2.7913a4.4944 4.4944 0 0 1-.6765 8.1042v-5.6772a.79.79 0 0 0-.407-.667zm2.0107-3.0231l-.142-.0852-4.7735-2.7818a.7759.7759 0 0 0-.7854 0L9.409 9.2297V6.8974a.0662.0662 0 0 1 .0284-.0615l4.8303-2.7866a4.4992 4.4992 0 0 1 6.6802 4.66zM8.3065 12.863l-2.02-1.1638a.0804.0804 0 0 1-.038-.0567V6.0742a4.4992 4.4992 0 0 1 7.3757-3.4537l-.142.0805L8.704 5.459a.7948.7948 0 0 0-.3927.6813zm1.0976-2.3654l2.602-1.4998 2.6069 1.4998v2.9994l-2.5974 1.4997-2.6067-1.4997Z" fill="#fff"/></svg>
<svg class="s" style="left:2906px;top:500px;" width="40" height="38" viewBox="0 0 40 38" fill="none"><rect x="6" y="3" width="12.5" height="12.5" rx="5" stroke="#ced0d6" stroke-width="3.2"/><rect x="21.5" y="3" width="12.5" height="12.5" rx="5" stroke="#ced0d6" stroke-width="3.2"/><path d="M3.5 16.5C1.5 18.5 0.8 21.5 0.8 24C0.8 30.5 9.5 35 20 35C30.5 35 39.2 30.5 39.2 24C39.2 21.5 38.5 18.5 36.5 16.5L33.5 18.5V27C33.5 29.5 27.5 31.5 20 31.5C12.5 31.5 6.5 29.5 6.5 27V18.5Z" fill="#ced0d6"/><rect x="14.3" y="20" width="3.6" height="7" rx="1.8" fill="#ced0d6"/><rect x="22.1" y="20" width="3.6" height="7" rx="1.8" fill="#ced0d6"/></svg>
<svg class="s" style="left:2906px;top:580px;" width="40" height="38" viewBox="0 0 40 38" fill="none"><rect x="6" y="3" width="12.5" height="12.5" rx="5" stroke="#ced0d6" stroke-width="3.2"/><rect x="21.5" y="3" width="12.5" height="12.5" rx="5" stroke="#ced0d6" stroke-width="3.2"/><path d="M3.5 16.5C1.5 18.5 0.8 21.5 0.8 24C0.8 30.5 9.5 35 20 35C30.5 35 39.2 30.5 39.2 24C39.2 21.5 38.5 18.5 36.5 16.5L33.5 18.5V27C33.5 29.5 27.5 31.5 20 31.5C12.5 31.5 6.5 29.5 6.5 27V18.5Z" fill="#ced0d6"/><rect x="14.3" y="20" width="3.6" height="7" rx="1.8" fill="#ced0d6"/><rect x="22.1" y="20" width="3.6" height="7" rx="1.8" fill="#ced0d6"/><rect x="19" y="17" width="22" height="16" rx="4" fill="#27282a"/><path d="M21.5 19.5H37.5C38.6 19.5 39.5 20.4 39.5 21.5V30C39.5 31.1 38.6 32 37.5 32H35V37L30 32H21.5C20.4 32 19.5 31.1 19.5 30V21.5C19.5 20.4 20.4 19.5 21.5 19.5Z" fill="#ced0d6"/></svg>
<div class="r" style="left:2896px;top:649px;width:60px;height:58px;background:#3f4044;border-radius:10px"></div>
<div class="t" style="left:2907px;top:647.56px;font-size:46px;line-height:55px;color:#ced0d6;font-weight:400;letter-spacing:0.0px;font-family:'Liberation Sans', sans-serif;font-style:italic">m</div>
<svg class="s" style="left:140px;top:2032px;" width="16" height="16" viewBox="0 0 16 16" fill="none"><rect x="1.2" y="1.2" width="13.6" height="13.6" rx="3" fill="#25324d" stroke="#548af7" stroke-width="2.2"/></svg>
<div class="t" style="left:165px;top:2022.64px;font-size:27px;line-height:32px;color:#a8abb0;font-weight:400;letter-spacing:0.1px;font-family:'Liberation Sans', sans-serif;">helloMaven</div>
<svg class="s" style="left:324px;top:2029px;" width="14" height="20" viewBox="0 0 14 20" fill="none"><path d="M3 3L10 10L3 17" stroke="#a8abb0" stroke-width="2" stroke-linecap="round" stroke-linejoin="round"/></svg>
<svg class="s" style="left:355px;top:2032px;" width="16" height="16" viewBox="0 0 16 16" fill="none"><rect x="1.2" y="1.2" width="13.6" height="13.6" rx="3" fill="#25324d" stroke="#548af7" stroke-width="2.2"/></svg>
<div class="t" style="left:379px;top:2022.64px;font-size:27px;line-height:32px;color:#a8abb0;font-weight:400;letter-spacing:0.1px;font-family:'Liberation Sans', sans-serif;">child2</div>
<svg class="s" style="left:473px;top:2029px;" width="14" height="20" viewBox="0 0 14 20" fill="none"><path d="M3 3L10 10L3 17" stroke="#a8abb0" stroke-width="2" stroke-linecap="round" stroke-linejoin="round"/></svg>
<div class="t" style="left:503px;top:2022.64px;font-size:27px;line-height:32px;color:#a8abb0;font-weight:400;letter-spacing:0.1px;font-family:'Liberation Sans', sans-serif;">src</div>
<svg class="s" style="left:559px;top:2029px;" width="14" height="20" viewBox="0 0 14 20" fill="none"><path d="M3 3L10 10L3 17" stroke="#a8abb0" stroke-width="2" stroke-linecap="round" stroke-linejoin="round"/></svg>
<div class="t" style="left:589px;top:2022.64px;font-size:27px;line-height:32px;color:#a8abb0;font-weight:400;letter-spacing:0.1px;font-family:'Liberation Sans', sans-serif;">main</div>
<svg class="s" style="left:667px;top:2029px;" width="14" height="20" viewBox="0 0 14 20" fill="none"><path d="M3 3L10 10L3 17" stroke="#a8abb0" stroke-width="2" stroke-linecap="round" stroke-linejoin="round"/></svg>
<div class="t" style="left:696px;top:2022.64px;font-size:27px;line-height:32px;color:#a8abb0;font-weight:400;letter-spacing:0.1px;font-family:'Liberation Sans', sans-serif;">java</div>
<svg class="s" style="left:763px;top:2029px;" width="14" height="20" viewBox="0 0 14 20" fill="none"><path d="M3 3L10 10L3 17" stroke="#a8abb0" stroke-width="2" stroke-linecap="round" stroke-linejoin="round"/></svg>
<div class="t" style="left:794px;top:2022.64px;font-size:27px;line-height:32px;color:#a8abb0;font-weight:400;letter-spacing:0.1px;font-family:'Liberation Sans', sans-serif;">org</div>
<svg class="s" style="left:855px;top:2029px;" width="14" height="20" viewBox="0 0 14 20" fill="none"><path d="M3 3L10 10L3 17" stroke="#a8abb0" stroke-width="2" stroke-linecap="round" stroke-linejoin="round"/></svg>
<div class="t" style="left:884px;top:2022.64px;font-size:27px;line-height:32px;color:#a8abb0;font-weight:400;letter-spacing:0.1px;font-family:'Liberation Sans', sans-serif;">example</div>
<svg class="s" style="left:1006px;top:2029px;" width="14" height="20" viewBox="0 0 14 20" fill="none"><path d="M3 3L10 10L3 17" stroke="#a8abb0" stroke-width="2" stroke-linecap="round" stroke-linejoin="round"/></svg>
<svg class="s" style="left:1035px;top:2024px;" width="32" height="32" viewBox="0 0 16 16" fill="none"><circle cx="8" cy="8" r="6.5" fill="#25324d" stroke="#548af7"/><path d="M10.6 6.2C10.1 5.2 9.2 4.6 8.1 4.6C6.4 4.6 5.1 6.1 5.1 8C5.1 9.9 6.4 11.4 8.1 11.4C9.2 11.4 10.1 10.8 10.6 9.8" stroke="#548af7" stroke-width="0.9"/></svg>
<div class="t" style="left:1076px;top:2022.64px;font-size:27px;line-height:32px;color:#a8abb0;font-weight:400;letter-spacing:0.1px;font-family:'Liberation Sans', sans-serif;">Main</div>
<svg class="s" style="left:2250px;top:2026px;" width="28" height="28" viewBox="-1 -1 26 26" fill="none"><path d="M22.2819 9.8211a5.9847 5.9847 0 0 0-.5157-4.9108 6.0462 6.0462 0 0 0-6.5098-2.9A6.0651 6.0651 0 0 0 4.9807 4.1818a5.9847 5.9847 0 0 0-3.9977 2.9 6.0462 6.0462 0 0 0 .7427 7.0966 5.98 5.98 0 0 0 .511 4.9107 6.051 6.051 0 0 0 6.5146 2.9001A5.9847 5.9847 0 0 0 13.2599 24a6.0557 6.0557 0 0 0 5.7718-4.2058 5.9894 5.9894 0 0 0 3.9977-2.9001 6.0557 6.0557 0 0 0-.7475-7.0729zm-9.022 12.6081a4.4755 4.4755 0 0 1-2.8764-1.0408l.1419-.0804 4.7783-2.7582a.7948.7948 0 0 0 .3927-.6813v-6.7369l2.02 1.1686a.071.071 0 0 1 .038.052v5.5826a4.504 4.504 0 0 1-4.4945 4.4944zm-9.6607-4.1254a4.4708 4.4708 0 0 1-.5346-3.0137l.142.0852 4.783 2.7582a.7712.7712 0 0 0 .7806 0l5.8428-3.3685v2.3324a.0804.0804 0 0 1-.0332.0615L9.74 19.9502a4.4992 4.4992 0 0 1-6.1408-1.6464zM2.3408 7.8956a4.485 4.485 0 0 1 2.3655-1.9728V11.6a.7664.7664 0 0 0 .3879.6765l5.8144 3.3543-2.0201 1.1685a.0757.0757 0 0 1-.071 0l-4.8303-2.7865A4.504 4.504 0 0 1 2.3408 7.872zm16.5963 3.8558L13.1038 8.364 15.1192 7.2a.0757.0757 0 0 1 .071 0l4.8303 2.7913a4.4944 4.4944 0 0 1-.6765 8.1042v-5.6772a.79.79 0 0 0-.407-.667zm2.0107-3.0231l-.142-.0852-4.7735-2.7818a.7759.7759 0 0 0-.7854 0L9.409 9.2297V6.8974a.0662.0662 0 0 1 .0284-.0615l4.8303-2.7866a4.4992 4.4992 0 0 1 6.6802 4.66zM8.3065 12.863l-2.02-1.1638a.0804.0804 0 0 1-.038-.0567V6.0742a4.4992 4.4992 0 0 1 7.3757-3.4537l-.142.0805L8.704 5.459a.7948.7948 0 0 0-.3927.6813zm1.0976-2.3654l2.602-1.4998 2.6069 1.4998v2.9994l-2.5974 1.4997-2.6067-1.4997Z" fill="#fff" stroke="#000" stroke-width="0.9" stroke-linejoin="round" paint-order="stroke"/><path d="M22.2819 9.8211a5.9847 5.9847 0 0 0-.5157-4.9108 6.0462 6.0462 0 0 0-6.5098-2.9A6.0651 6.0651 0 0 0 4.9807 4.1818a5.9847 5.9847 0 0 0-3.9977 2.9 6.0462 6.0462 0 0 0 .7427 7.0966 5.98 5.98 0 0 0 .511 4.9107 6.051 6.051 0 0 0 6.5146 2.9001A5.9847 5.9847 0 0 0 13.2599 24a6.0557 6.0557 0 0 0 5.7718-4.2058 5.9894 5.9894 0 0 0 3.9977-2.9001 6.0557 6.0557 0 0 0-.7475-7.0729zm-9.022 12.6081a4.4755 4.4755 0 0 1-2.8764-1.0408l.1419-.0804 4.7783-2.7582a.7948.7948 0 0 0 .3927-.6813v-6.7369l2.02 1.1686a.071.071 0 0 1 .038.052v5.5826a4.504 4.504 0 0 1-4.4945 4.4944zm-9.6607-4.1254a4.4708 4.4708 0 0 1-.5346-3.0137l.142.0852 4.783 2.7582a.7712.7712 0 0 0 .7806 0l5.8428-3.3685v2.3324a.0804.0804 0 0 1-.0332.0615L9.74 19.9502a4.4992 4.4992 0 0 1-6.1408-1.6464zM2.3408 7.8956a4.485 4.485 0 0 1 2.3655-1.9728V11.6a.7664.7664 0 0 0 .3879.6765l5.8144 3.3543-2.0201 1.1685a.0757.0757 0 0 1-.071 0l-4.8303-2.7865A4.504 4.504 0 0 1 2.3408 7.872zm16.5963 3.8558L13.1038 8.364 15.1192 7.2a.0757.0757 0 0 1 .071 0l4.8303 2.7913a4.4944 4.4944 0 0 1-.6765 8.1042v-5.6772a.79.79 0 0 0-.407-.667zm2.0107-3.0231l-.142-.0852-4.7735-2.7818a.7759.7759 0 0 0-.7854 0L9.409 9.2297V6.8974a.0662.0662 0 0 1 .0284-.0615l4.8303-2.7866a4.4992 4.4992 0 0 1 6.6802 4.66zM8.3065 12.863l-2.02-1.1638a.0804.0804 0 0 1-.038-.0567V6.0742a4.4992 4.4992 0 0 1 7.3757-3.4537l-.142.0805L8.704 5.459a.7948.7948 0 0 0-.3927.6813zm1.0976-2.3654l2.602-1.4998 2.6069 1.4998v2.9994l-2.5974 1.4997-2.6067-1.4997Z" fill="#fff"/></svg>
<svg class="s" style="left:2308px;top:2024px;" width="32" height="34" viewBox="0 0 32 34" fill="none"><defs><linearGradient id="vg" x1="0" y1="0" x2="1" y2="1"><stop offset="0" stop-color="#42e860"/><stop offset="0.55" stop-color="#1aa0b0"/><stop offset="1" stop-color="#0a78ff"/></linearGradient></defs><path d="M3 3H13V18L19.5 3H29L15 29H3Z" fill="url(#vg)"/></svg>
<div class="t" style="left:2372px;top:2022.64px;font-size:27px;line-height:32px;color:#a8abb0;font-weight:400;letter-spacing:-0.4px;font-family:'Liberation Sans', sans-serif;">12:1</div>
<div class="t" style="left:2453px;top:2022.64px;font-size:27px;line-height:32px;color:#a8abb0;font-weight:400;letter-spacing:0.1px;font-family:'Liberation Sans', sans-serif;">LF</div>
<div class="t" style="left:2515px;top:2022.64px;font-size:27px;line-height:32px;color:#a8abb0;font-weight:400;letter-spacing:0.1px;font-family:'Liberation Sans', sans-serif;">UTF<span style="letter-spacing:1.90px">-</span>8</div>
<svg class="s" style="left:2627px;top:2022px;" width="32" height="32" viewBox="0 0 40 38" fill="none"><rect x="6" y="3" width="12.5" height="12.5" rx="5" stroke="#ced0d6" stroke-width="3.2"/><rect x="21.5" y="3" width="12.5" height="12.5" rx="5" stroke="#ced0d6" stroke-width="3.2"/><path d="M3.5 16.5C1.5 18.5 0.8 21.5 0.8 24C0.8 30.5 9.5 35 20 35C30.5 35 39.2 30.5 39.2 24C39.2 21.5 38.5 18.5 36.5 16.5L33.5 18.5V27C33.5 29.5 27.5 31.5 20 31.5C12.5 31.5 6.5 29.5 6.5 27V18.5Z" fill="#ced0d6"/><rect x="14.3" y="20" width="3.6" height="7" rx="1.8" fill="#ced0d6"/><rect x="22.1" y="20" width="3.6" height="7" rx="1.8" fill="#ced0d6"/></svg>
<div class="t" style="left:2691px;top:2022.64px;font-size:27px;line-height:32px;color:#a8abb0;font-weight:400;letter-spacing:0.1px;font-family:'Liberation Sans', sans-serif;">4 spaces</div>
<svg class="s" style="left:2836px;top:2022px;" width="34" height="36" viewBox="0 0 34 36" fill="none"><rect x="3" y="17" width="20" height="15" rx="3" stroke="#ced0d6" stroke-width="2.4"/><path d="M13 22V26" stroke="#ced0d6" stroke-width="2.4" stroke-linecap="round"/><path d="M18 17V11C18 7.5 20.5 5 24 5C27.5 5 30 7.5 30 11V13" stroke="#ced0d6" stroke-width="2.4" stroke-linecap="round"/></svg>
<div class="r" style="left:2900px;top:2026px;width:28px;height:28px;border-radius:14px;background:#db5c5c"></div>
<svg class="s" style="left:2900px;top:2026px;" width="28" height="28" viewBox="0 0 28 28" fill="none"><path d="M14 6.5V16" stroke="#fff" stroke-width="3" stroke-linecap="round"/><circle cx="14" cy="21" r="2" fill="#fff"/></svg>
</div></div>
<div style="position:absolute;left:112px;top:76px;width:2854px;height:1993px;border-radius:20px;box-shadow:inset 0 0 0 2px rgba(255,255,255,0.24);pointer-events:none"></div></body></html>
